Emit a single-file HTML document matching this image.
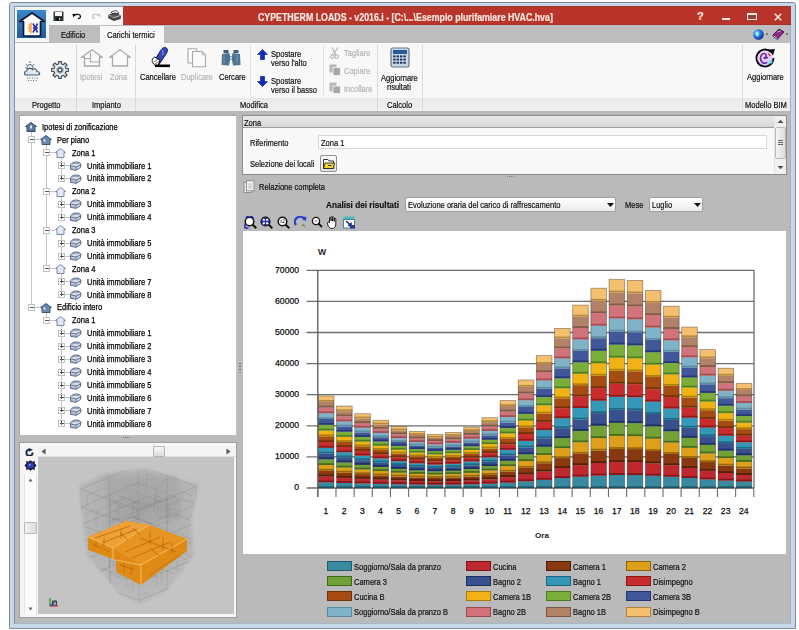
<!DOCTYPE html>
<html><head><meta charset="utf-8">
<style>
*{margin:0;padding:0;box-sizing:border-box}
html,body{width:799px;height:630px;overflow:hidden;background:#fff;font-family:"Liberation Sans",sans-serif;color:#111}
.a{position:absolute}
.t{position:absolute;white-space:nowrap;font-size:8.8px;line-height:10px;transform:scaleX(.855);transform-origin:0 0;color:#111;-webkit-text-stroke-width:0.2px}
</style></head><body>
<!-- window frame -->
<div class="a" style="left:9px;top:2px;width:787px;height:627px;border:1px solid #7a8a9a;background:#c8d8e8;border-radius:3px 3px 0 0"></div>
<!-- app area -->
<div class="a" id="app" style="left:14px;top:6px;width:777px;height:618px;background:#bababa;border-left:1px solid #8890a0;border-right:1px solid #a8b0c0;border-bottom:1px solid #a8b8c8"></div>
<!-- title bar -->
<div class="a" style="left:123px;top:6px;width:668px;height:19px;background:#b9352a;border-top:1px solid #963a30;border-bottom:1px solid #a83028"></div>
<div class="t" style="left:258px;top:13px;font-size:10.3px;font-weight:bold;color:#fbe8e0">CYPETHERM LOADS - v2016.i - [C:\...\Esempio plurifamiare HVAC.hva]</div>
<!-- QAT -->
<div class="a" style="left:14px;top:6px;width:109px;height:19px;background:#fafafa;border-top:1px solid #8a96a4;border-left:1px solid #8890a0"></div>
<!-- app icon -->
<div class="a" style="left:15px;top:7px;width:35px;height:35px;background:#f4f8fc"></div>
<div class="a" style="left:17px;top:10px;width:29px;height:28px;background:linear-gradient(#3d86cc,#1f5aa0)"></div>
<!-- tabs row -->
<div class="a" style="left:49px;top:25px;width:741px;height:18px;background:#bdbdbd"></div>
<div class="t" style="left:61px;top:30px">Edificio</div>
<div class="a" style="left:100px;top:26px;width:64px;height:18px;background:#f8f8f8"></div>
<div class="t" style="left:107px;top:30px">Carichi termici</div>
<!-- ribbon -->
<div class="a" style="left:15px;top:43px;width:775px;height:55px;background:#f8f8f8"></div>
<div class="a" style="left:15px;top:98px;width:775px;height:13px;background:linear-gradient(#e6e6e6,#ececec 20%,#eeeeee 80%,#f2f2f2)"></div>
<div class="a" style="left:15px;top:111px;width:775px;height:4px;background:#b8b8b8"></div>
<div class="t" style="left:32px;top:100px">Progetto</div>
<div class="t" style="left:92px;top:100px">Impianto</div>
<div class="t" style="left:240px;top:100px">Modifica</div>
<div class="t" style="left:387px;top:100px">Calcolo</div>
<div class="t" style="left:745px;top:100px">Modello BIM</div>
<!-- separators -->
<div class="a" style="left:76px;top:45px;width:1px;height:66px;background:#d8d8d8"></div>
<div class="a" style="left:135px;top:45px;width:1px;height:66px;background:#d8d8d8"></div>
<div class="a" style="left:377px;top:45px;width:1px;height:66px;background:#d8d8d8"></div>
<div class="a" style="left:422px;top:45px;width:1px;height:66px;background:#d8d8d8"></div>
<div class="a" style="left:742px;top:45px;width:1px;height:66px;background:#d8d8d8"></div>
<div class="a" style="left:250px;top:45px;width:1px;height:50px;background:#e0e0e0"></div>
<div class="a" style="left:323px;top:45px;width:1px;height:50px;background:#e0e0e0"></div>

<!-- tree panel -->
<div class="a" style="left:19px;top:115px;width:218px;height:321px;background:#fff;border:1px solid #a8a8a8;border-right-color:#c4c4c4;border-bottom-color:#c0c0c0"></div>
<!-- 3D panel -->
<div class="a" style="left:19px;top:442px;width:218px;height:176px;background:#f6f6f6;border:1px solid #a0a0a0"></div>
<div class="a" style="left:38px;top:457px;width:196px;height:157px;background:#c4c4c4"></div>

<!-- right: zona panel -->
<div class="a" style="left:242px;top:115px;width:545px;height:60px;background:#f8f8f8;border:1px solid #8c8c8c"></div>
<div class="a" style="left:243px;top:116px;width:531px;height:12px;background:linear-gradient(#e8e8e8,#d8d8d8);border-bottom:1px solid #a0a0a0"></div>
<div class="t" style="left:244px;top:118px">Zona</div>
<div class="a" style="left:774px;top:116px;width:12px;height:58px;background:#f0f0f0;border-left:1px solid #e4e4e4"></div><svg class="a" style="left:777px;top:119px" width="7" height="5"><path d="M0.5 4 L3.5 0.8 L6.5 4 Z" fill="#505050"/></svg><div class="a" style="left:775px;top:127px;width:11px;height:32px;background:linear-gradient(90deg,#f6f6f6,#dcdcdc);border:1px solid #b8b8b8;border-radius:2px"></div><div class="a" style="left:778px;top:140px;width:5px;height:1px;background:#666;box-shadow:0 2px 0 #666,0 4px 0 #666"></div><svg class="a" style="left:777px;top:165px" width="7" height="5"><path d="M0.5 1 L3.5 4.2 L6.5 1 Z" fill="#505050"/></svg>
<div class="t" style="left:250px;top:138px">Riferimento</div>
<div class="a" style="left:318px;top:135px;width:449px;height:14px;background:#fff;border:1px solid #d8d8d8"></div>
<div class="t" style="left:321px;top:138px">Zona 1</div>
<div class="t" style="left:250px;top:159px">Selezione dei locali</div>
<div class="a" style="left:320px;top:155px;width:17px;height:17px;background:linear-gradient(#fafafa,#e0e0e0);border:1px solid #909090;border-radius:2px"></div>

<!-- chart area -->
<div class="t" style="left:259px;top:182px">Relazione completa</div>
<div class="t" style="left:326px;top:200px;font-size:9.6px;font-weight:bold">Analisi dei risultati</div>
<div class="a" style="left:405px;top:197px;width:211px;height:15px;background:linear-gradient(#fff,#ececec);border:1px solid #a0a0a0;border-radius:2px"></div>
<div class="t" style="left:408px;top:200px">Evoluzione oraria del carico di raffrescamento</div>
<div class="t" style="left:625px;top:200px">Mese</div>
<div class="a" style="left:649px;top:197px;width:54px;height:15px;background:linear-gradient(#fff,#ececec);border:1px solid #a0a0a0;border-radius:2px"></div>
<div class="t" style="left:652px;top:200px">Luglio</div>

<div class="a" style="left:243px;top:231px;width:543px;height:323px;background:#fff"></div>
<!-- splitter dots --><div class="a" style="left:239px;top:363px;width:2px;height:1px;background:#707070;box-shadow:0 3px 0 #707070,0 6px 0 #707070,0 9px 0 #909090"></div><div class="a" style="left:123px;top:437px;width:1px;height:1px;background:#707070;box-shadow:2px 0 0 #707070,4px 0 0 #707070,6px 0 0 #707070"></div><div class="a" style="left:507px;top:176px;width:1px;height:1px;background:#808080;box-shadow:2px 0 0 #808080,4px 0 0 #808080,6px 0 0 #808080"></div>
<svg class="a" style="left:243px;top:231px" width="543" height="323" viewBox="243 231 543 323">
<line x1="306.5" y1="488.00" x2="754" y2="488.00" stroke="#6e6e6e" stroke-width="1.3"/>
<text x="299" y="490.20" text-anchor="end" font-size="8.6" fill="#111" stroke="#111" stroke-width="0.25" font-family="Liberation Sans">0</text>
<line x1="306.5" y1="456.90" x2="754" y2="456.90" stroke="#6e6e6e" stroke-width="1.3"/>
<text x="299" y="459.10" text-anchor="end" font-size="8.6" fill="#111" stroke="#111" stroke-width="0.25" font-family="Liberation Sans">10000</text>
<line x1="306.5" y1="425.80" x2="754" y2="425.80" stroke="#6e6e6e" stroke-width="1.3"/>
<text x="299" y="428.00" text-anchor="end" font-size="8.6" fill="#111" stroke="#111" stroke-width="0.25" font-family="Liberation Sans">20000</text>
<line x1="306.5" y1="394.70" x2="754" y2="394.70" stroke="#6e6e6e" stroke-width="1.3"/>
<text x="299" y="396.90" text-anchor="end" font-size="8.6" fill="#111" stroke="#111" stroke-width="0.25" font-family="Liberation Sans">30000</text>
<line x1="306.5" y1="363.60" x2="754" y2="363.60" stroke="#6e6e6e" stroke-width="1.3"/>
<text x="299" y="365.80" text-anchor="end" font-size="8.6" fill="#111" stroke="#111" stroke-width="0.25" font-family="Liberation Sans">40000</text>
<line x1="306.5" y1="332.50" x2="754" y2="332.50" stroke="#6e6e6e" stroke-width="1.3"/>
<text x="299" y="334.70" text-anchor="end" font-size="8.6" fill="#111" stroke="#111" stroke-width="0.25" font-family="Liberation Sans">50000</text>
<line x1="306.5" y1="301.40" x2="754" y2="301.40" stroke="#6e6e6e" stroke-width="1.3"/>
<text x="299" y="303.60" text-anchor="end" font-size="8.6" fill="#111" stroke="#111" stroke-width="0.25" font-family="Liberation Sans">60000</text>
<line x1="306.5" y1="270.30" x2="754" y2="270.30" stroke="#6e6e6e" stroke-width="1.3"/>
<text x="299" y="272.50" text-anchor="end" font-size="8.6" fill="#111" stroke="#111" stroke-width="0.25" font-family="Liberation Sans">70000</text>
<line x1="754" y1="270.30" x2="754" y2="488.00" stroke="#6e6e6e" stroke-width="1.3"/>
<rect x="318.40" y="482.25" width="15.6" height="5.75" fill="#378aa0"/>
<rect x="318.40" y="486.20" width="15.6" height="1.8" fill="#1d5a6c" opacity="0.9"/>
<rect x="318.40" y="476.50" width="15.6" height="5.75" fill="#c0282f"/>
<rect x="318.40" y="480.45" width="15.6" height="1.8" fill="#7a1418" opacity="0.9"/>
<rect x="318.40" y="470.75" width="15.6" height="5.75" fill="#8a3810"/>
<rect x="318.40" y="474.70" width="15.6" height="1.8" fill="#4e1e05" opacity="0.9"/>
<rect x="318.40" y="465.00" width="15.6" height="5.75" fill="#dea01a"/>
<rect x="318.40" y="468.95" width="15.6" height="1.8" fill="#8f6208" opacity="0.9"/>
<rect x="318.40" y="459.25" width="15.6" height="5.75" fill="#72a236"/>
<rect x="318.40" y="463.20" width="15.6" height="1.8" fill="#44661a" opacity="0.9"/>
<rect x="318.40" y="453.50" width="15.6" height="5.75" fill="#38508e"/>
<rect x="318.40" y="457.45" width="15.6" height="1.8" fill="#1c2c5c" opacity="0.9"/>
<rect x="318.40" y="447.75" width="15.6" height="5.75" fill="#3698b8"/>
<rect x="318.40" y="451.70" width="15.6" height="1.8" fill="#1a6680" opacity="0.9"/>
<rect x="318.40" y="442.00" width="15.6" height="5.75" fill="#c82c2c"/>
<rect x="318.40" y="445.95" width="15.6" height="1.8" fill="#861818" opacity="0.9"/>
<rect x="318.40" y="436.25" width="15.6" height="5.75" fill="#a64c12"/>
<rect x="318.40" y="440.20" width="15.6" height="1.8" fill="#6e3008" opacity="0.9"/>
<rect x="318.40" y="430.50" width="15.6" height="5.75" fill="#f0b214"/>
<rect x="318.40" y="434.45" width="15.6" height="1.8" fill="#a67a08" opacity="0.9"/>
<rect x="318.40" y="424.75" width="15.6" height="5.75" fill="#7aae38"/>
<rect x="318.40" y="428.70" width="15.6" height="1.8" fill="#4e7a1c" opacity="0.9"/>
<rect x="318.40" y="419.00" width="15.6" height="5.75" fill="#40589a"/>
<rect x="318.40" y="422.95" width="15.6" height="1.8" fill="#243470" opacity="0.9"/>
<rect x="318.40" y="413.25" width="15.6" height="5.75" fill="#80b2c8"/>
<rect x="318.40" y="417.20" width="15.6" height="1.8" fill="#5a8aa0" opacity="0.9"/>
<rect x="318.40" y="407.50" width="15.6" height="5.75" fill="#d2727a"/>
<rect x="318.40" y="411.45" width="15.6" height="1.8" fill="#9a4a50" opacity="0.9"/>
<rect x="318.40" y="401.75" width="15.6" height="5.75" fill="#b28268"/>
<rect x="318.40" y="405.70" width="15.6" height="1.8" fill="#7c5640" opacity="0.9"/>
<rect x="318.40" y="396.00" width="15.6" height="5.75" fill="#f4c070"/>
<rect x="318.40" y="399.95" width="15.6" height="1.8" fill="#b08438" opacity="0.9"/>
<rect x="318.40" y="396.00" width="15.6" height="92.00" fill="none" stroke="#2a2018" stroke-opacity="0.45" stroke-width="0.8"/>
<rect x="336.57" y="482.88" width="15.6" height="5.12" fill="#378aa0"/>
<rect x="336.57" y="486.20" width="15.6" height="1.8" fill="#1d5a6c" opacity="0.9"/>
<rect x="336.57" y="477.75" width="15.6" height="5.12" fill="#c0282f"/>
<rect x="336.57" y="481.07" width="15.6" height="1.8" fill="#7a1418" opacity="0.9"/>
<rect x="336.57" y="472.62" width="15.6" height="5.12" fill="#8a3810"/>
<rect x="336.57" y="475.95" width="15.6" height="1.8" fill="#4e1e05" opacity="0.9"/>
<rect x="336.57" y="467.50" width="15.6" height="5.12" fill="#dea01a"/>
<rect x="336.57" y="470.82" width="15.6" height="1.8" fill="#8f6208" opacity="0.9"/>
<rect x="336.57" y="462.38" width="15.6" height="5.12" fill="#72a236"/>
<rect x="336.57" y="465.70" width="15.6" height="1.8" fill="#44661a" opacity="0.9"/>
<rect x="336.57" y="457.25" width="15.6" height="5.12" fill="#38508e"/>
<rect x="336.57" y="460.57" width="15.6" height="1.8" fill="#1c2c5c" opacity="0.9"/>
<rect x="336.57" y="452.12" width="15.6" height="5.12" fill="#3698b8"/>
<rect x="336.57" y="455.45" width="15.6" height="1.8" fill="#1a6680" opacity="0.9"/>
<rect x="336.57" y="447.00" width="15.6" height="5.12" fill="#c82c2c"/>
<rect x="336.57" y="450.32" width="15.6" height="1.8" fill="#861818" opacity="0.9"/>
<rect x="336.57" y="441.88" width="15.6" height="5.12" fill="#a64c12"/>
<rect x="336.57" y="445.20" width="15.6" height="1.8" fill="#6e3008" opacity="0.9"/>
<rect x="336.57" y="436.75" width="15.6" height="5.12" fill="#f0b214"/>
<rect x="336.57" y="440.07" width="15.6" height="1.8" fill="#a67a08" opacity="0.9"/>
<rect x="336.57" y="431.62" width="15.6" height="5.12" fill="#7aae38"/>
<rect x="336.57" y="434.95" width="15.6" height="1.8" fill="#4e7a1c" opacity="0.9"/>
<rect x="336.57" y="426.50" width="15.6" height="5.12" fill="#40589a"/>
<rect x="336.57" y="429.82" width="15.6" height="1.8" fill="#243470" opacity="0.9"/>
<rect x="336.57" y="421.38" width="15.6" height="5.12" fill="#80b2c8"/>
<rect x="336.57" y="424.70" width="15.6" height="1.8" fill="#5a8aa0" opacity="0.9"/>
<rect x="336.57" y="416.25" width="15.6" height="5.12" fill="#d2727a"/>
<rect x="336.57" y="419.57" width="15.6" height="1.8" fill="#9a4a50" opacity="0.9"/>
<rect x="336.57" y="411.12" width="15.6" height="5.12" fill="#b28268"/>
<rect x="336.57" y="414.45" width="15.6" height="1.8" fill="#7c5640" opacity="0.9"/>
<rect x="336.57" y="406.00" width="15.6" height="5.12" fill="#f4c070"/>
<rect x="336.57" y="409.32" width="15.6" height="1.8" fill="#b08438" opacity="0.9"/>
<rect x="336.57" y="406.00" width="15.6" height="82.00" fill="none" stroke="#2a2018" stroke-opacity="0.45" stroke-width="0.8"/>
<rect x="354.73" y="483.36" width="15.6" height="4.64" fill="#378aa0"/>
<rect x="354.73" y="486.20" width="15.6" height="1.8" fill="#1d5a6c" opacity="0.9"/>
<rect x="354.73" y="478.72" width="15.6" height="4.64" fill="#c0282f"/>
<rect x="354.73" y="481.56" width="15.6" height="1.8" fill="#7a1418" opacity="0.9"/>
<rect x="354.73" y="474.08" width="15.6" height="4.64" fill="#8a3810"/>
<rect x="354.73" y="476.92" width="15.6" height="1.8" fill="#4e1e05" opacity="0.9"/>
<rect x="354.73" y="469.44" width="15.6" height="4.64" fill="#dea01a"/>
<rect x="354.73" y="472.28" width="15.6" height="1.8" fill="#8f6208" opacity="0.9"/>
<rect x="354.73" y="464.80" width="15.6" height="4.64" fill="#72a236"/>
<rect x="354.73" y="467.64" width="15.6" height="1.8" fill="#44661a" opacity="0.9"/>
<rect x="354.73" y="460.16" width="15.6" height="4.64" fill="#38508e"/>
<rect x="354.73" y="463.00" width="15.6" height="1.8" fill="#1c2c5c" opacity="0.9"/>
<rect x="354.73" y="455.52" width="15.6" height="4.64" fill="#3698b8"/>
<rect x="354.73" y="458.36" width="15.6" height="1.8" fill="#1a6680" opacity="0.9"/>
<rect x="354.73" y="450.88" width="15.6" height="4.64" fill="#c82c2c"/>
<rect x="354.73" y="453.72" width="15.6" height="1.8" fill="#861818" opacity="0.9"/>
<rect x="354.73" y="446.23" width="15.6" height="4.64" fill="#a64c12"/>
<rect x="354.73" y="449.07" width="15.6" height="1.8" fill="#6e3008" opacity="0.9"/>
<rect x="354.73" y="441.59" width="15.6" height="4.64" fill="#f0b214"/>
<rect x="354.73" y="444.43" width="15.6" height="1.8" fill="#a67a08" opacity="0.9"/>
<rect x="354.73" y="436.95" width="15.6" height="4.64" fill="#7aae38"/>
<rect x="354.73" y="439.79" width="15.6" height="1.8" fill="#4e7a1c" opacity="0.9"/>
<rect x="354.73" y="432.31" width="15.6" height="4.64" fill="#40589a"/>
<rect x="354.73" y="435.15" width="15.6" height="1.8" fill="#243470" opacity="0.9"/>
<rect x="354.73" y="427.67" width="15.6" height="4.64" fill="#80b2c8"/>
<rect x="354.73" y="430.51" width="15.6" height="1.8" fill="#5a8aa0" opacity="0.9"/>
<rect x="354.73" y="423.03" width="15.6" height="4.64" fill="#d2727a"/>
<rect x="354.73" y="425.87" width="15.6" height="1.8" fill="#9a4a50" opacity="0.9"/>
<rect x="354.73" y="418.39" width="15.6" height="4.64" fill="#b28268"/>
<rect x="354.73" y="421.23" width="15.6" height="1.8" fill="#7c5640" opacity="0.9"/>
<rect x="354.73" y="413.75" width="15.6" height="4.64" fill="#f4c070"/>
<rect x="354.73" y="416.59" width="15.6" height="1.8" fill="#b08438" opacity="0.9"/>
<rect x="354.73" y="413.75" width="15.6" height="74.25" fill="none" stroke="#2a2018" stroke-opacity="0.45" stroke-width="0.8"/>
<rect x="372.90" y="483.77" width="15.6" height="4.23" fill="#378aa0"/>
<rect x="372.90" y="486.20" width="15.6" height="1.8" fill="#1d5a6c" opacity="0.9"/>
<rect x="372.90" y="479.53" width="15.6" height="4.23" fill="#c0282f"/>
<rect x="372.90" y="481.97" width="15.6" height="1.8" fill="#7a1418" opacity="0.9"/>
<rect x="372.90" y="475.30" width="15.6" height="4.23" fill="#8a3810"/>
<rect x="372.90" y="477.73" width="15.6" height="1.8" fill="#4e1e05" opacity="0.9"/>
<rect x="372.90" y="471.06" width="15.6" height="4.23" fill="#dea01a"/>
<rect x="372.90" y="473.50" width="15.6" height="1.8" fill="#8f6208" opacity="0.9"/>
<rect x="372.90" y="466.83" width="15.6" height="4.23" fill="#72a236"/>
<rect x="372.90" y="469.26" width="15.6" height="1.8" fill="#44661a" opacity="0.9"/>
<rect x="372.90" y="462.59" width="15.6" height="4.23" fill="#38508e"/>
<rect x="372.90" y="465.03" width="15.6" height="1.8" fill="#1c2c5c" opacity="0.9"/>
<rect x="372.90" y="458.36" width="15.6" height="4.23" fill="#3698b8"/>
<rect x="372.90" y="460.79" width="15.6" height="1.8" fill="#1a6680" opacity="0.9"/>
<rect x="372.90" y="454.12" width="15.6" height="4.23" fill="#c82c2c"/>
<rect x="372.90" y="456.56" width="15.6" height="1.8" fill="#861818" opacity="0.9"/>
<rect x="372.90" y="449.89" width="15.6" height="4.23" fill="#a64c12"/>
<rect x="372.90" y="452.32" width="15.6" height="1.8" fill="#6e3008" opacity="0.9"/>
<rect x="372.90" y="445.66" width="15.6" height="4.23" fill="#f0b214"/>
<rect x="372.90" y="448.09" width="15.6" height="1.8" fill="#a67a08" opacity="0.9"/>
<rect x="372.90" y="441.42" width="15.6" height="4.23" fill="#7aae38"/>
<rect x="372.90" y="443.86" width="15.6" height="1.8" fill="#4e7a1c" opacity="0.9"/>
<rect x="372.90" y="437.19" width="15.6" height="4.23" fill="#40589a"/>
<rect x="372.90" y="439.62" width="15.6" height="1.8" fill="#243470" opacity="0.9"/>
<rect x="372.90" y="432.95" width="15.6" height="4.23" fill="#80b2c8"/>
<rect x="372.90" y="435.39" width="15.6" height="1.8" fill="#5a8aa0" opacity="0.9"/>
<rect x="372.90" y="428.72" width="15.6" height="4.23" fill="#d2727a"/>
<rect x="372.90" y="431.15" width="15.6" height="1.8" fill="#9a4a50" opacity="0.9"/>
<rect x="372.90" y="424.48" width="15.6" height="4.23" fill="#b28268"/>
<rect x="372.90" y="426.92" width="15.6" height="1.8" fill="#7c5640" opacity="0.9"/>
<rect x="372.90" y="420.25" width="15.6" height="4.23" fill="#f4c070"/>
<rect x="372.90" y="422.68" width="15.6" height="1.8" fill="#b08438" opacity="0.9"/>
<rect x="372.90" y="420.25" width="15.6" height="67.75" fill="none" stroke="#2a2018" stroke-opacity="0.45" stroke-width="0.8"/>
<rect x="391.06" y="484.16" width="15.6" height="3.84" fill="#378aa0"/>
<rect x="391.06" y="486.20" width="15.6" height="1.8" fill="#1d5a6c" opacity="0.9"/>
<rect x="391.06" y="480.33" width="15.6" height="3.84" fill="#c0282f"/>
<rect x="391.06" y="482.36" width="15.6" height="1.8" fill="#7a1418" opacity="0.9"/>
<rect x="391.06" y="476.49" width="15.6" height="3.84" fill="#8a3810"/>
<rect x="391.06" y="478.52" width="15.6" height="1.8" fill="#4e1e05" opacity="0.9"/>
<rect x="391.06" y="472.65" width="15.6" height="3.84" fill="#dea01a"/>
<rect x="391.06" y="474.69" width="15.6" height="1.8" fill="#8f6208" opacity="0.9"/>
<rect x="391.06" y="468.81" width="15.6" height="3.84" fill="#72a236"/>
<rect x="391.06" y="470.85" width="15.6" height="1.8" fill="#44661a" opacity="0.9"/>
<rect x="391.06" y="464.98" width="15.6" height="3.84" fill="#38508e"/>
<rect x="391.06" y="467.01" width="15.6" height="1.8" fill="#1c2c5c" opacity="0.9"/>
<rect x="391.06" y="461.14" width="15.6" height="3.84" fill="#3698b8"/>
<rect x="391.06" y="463.18" width="15.6" height="1.8" fill="#1a6680" opacity="0.9"/>
<rect x="391.06" y="457.30" width="15.6" height="3.84" fill="#c82c2c"/>
<rect x="391.06" y="459.34" width="15.6" height="1.8" fill="#861818" opacity="0.9"/>
<rect x="391.06" y="453.46" width="15.6" height="3.84" fill="#a64c12"/>
<rect x="391.06" y="455.50" width="15.6" height="1.8" fill="#6e3008" opacity="0.9"/>
<rect x="391.06" y="449.63" width="15.6" height="3.84" fill="#f0b214"/>
<rect x="391.06" y="451.66" width="15.6" height="1.8" fill="#a67a08" opacity="0.9"/>
<rect x="391.06" y="445.79" width="15.6" height="3.84" fill="#7aae38"/>
<rect x="391.06" y="447.82" width="15.6" height="1.8" fill="#4e7a1c" opacity="0.9"/>
<rect x="391.06" y="441.95" width="15.6" height="3.84" fill="#40589a"/>
<rect x="391.06" y="443.99" width="15.6" height="1.8" fill="#243470" opacity="0.9"/>
<rect x="391.06" y="438.11" width="15.6" height="3.84" fill="#80b2c8"/>
<rect x="391.06" y="440.15" width="15.6" height="1.8" fill="#5a8aa0" opacity="0.9"/>
<rect x="391.06" y="434.28" width="15.6" height="3.84" fill="#d2727a"/>
<rect x="391.06" y="436.31" width="15.6" height="1.8" fill="#9a4a50" opacity="0.9"/>
<rect x="391.06" y="430.44" width="15.6" height="3.84" fill="#b28268"/>
<rect x="391.06" y="432.48" width="15.6" height="1.8" fill="#7c5640" opacity="0.9"/>
<rect x="391.06" y="426.60" width="15.6" height="3.84" fill="#f4c070"/>
<rect x="391.06" y="428.64" width="15.6" height="1.8" fill="#b08438" opacity="0.9"/>
<rect x="391.06" y="426.60" width="15.6" height="61.40" fill="none" stroke="#2a2018" stroke-opacity="0.45" stroke-width="0.8"/>
<rect x="409.23" y="484.46" width="15.6" height="3.54" fill="#378aa0"/>
<rect x="409.23" y="486.20" width="15.6" height="1.8" fill="#1d5a6c" opacity="0.9"/>
<rect x="409.23" y="480.92" width="15.6" height="3.54" fill="#c0282f"/>
<rect x="409.23" y="482.66" width="15.6" height="1.8" fill="#7a1418" opacity="0.9"/>
<rect x="409.23" y="477.39" width="15.6" height="3.54" fill="#8a3810"/>
<rect x="409.23" y="479.12" width="15.6" height="1.8" fill="#4e1e05" opacity="0.9"/>
<rect x="409.23" y="473.85" width="15.6" height="3.54" fill="#dea01a"/>
<rect x="409.23" y="475.59" width="15.6" height="1.8" fill="#8f6208" opacity="0.9"/>
<rect x="409.23" y="470.31" width="15.6" height="3.54" fill="#72a236"/>
<rect x="409.23" y="472.05" width="15.6" height="1.8" fill="#44661a" opacity="0.9"/>
<rect x="409.23" y="466.77" width="15.6" height="3.54" fill="#38508e"/>
<rect x="409.23" y="468.51" width="15.6" height="1.8" fill="#1c2c5c" opacity="0.9"/>
<rect x="409.23" y="463.24" width="15.6" height="3.54" fill="#3698b8"/>
<rect x="409.23" y="464.97" width="15.6" height="1.8" fill="#1a6680" opacity="0.9"/>
<rect x="409.23" y="459.70" width="15.6" height="3.54" fill="#c82c2c"/>
<rect x="409.23" y="461.44" width="15.6" height="1.8" fill="#861818" opacity="0.9"/>
<rect x="409.23" y="456.16" width="15.6" height="3.54" fill="#a64c12"/>
<rect x="409.23" y="457.90" width="15.6" height="1.8" fill="#6e3008" opacity="0.9"/>
<rect x="409.23" y="452.62" width="15.6" height="3.54" fill="#f0b214"/>
<rect x="409.23" y="454.36" width="15.6" height="1.8" fill="#a67a08" opacity="0.9"/>
<rect x="409.23" y="449.09" width="15.6" height="3.54" fill="#7aae38"/>
<rect x="409.23" y="450.82" width="15.6" height="1.8" fill="#4e7a1c" opacity="0.9"/>
<rect x="409.23" y="445.55" width="15.6" height="3.54" fill="#40589a"/>
<rect x="409.23" y="447.29" width="15.6" height="1.8" fill="#243470" opacity="0.9"/>
<rect x="409.23" y="442.01" width="15.6" height="3.54" fill="#80b2c8"/>
<rect x="409.23" y="443.75" width="15.6" height="1.8" fill="#5a8aa0" opacity="0.9"/>
<rect x="409.23" y="438.47" width="15.6" height="3.54" fill="#d2727a"/>
<rect x="409.23" y="440.21" width="15.6" height="1.8" fill="#9a4a50" opacity="0.9"/>
<rect x="409.23" y="434.94" width="15.6" height="3.54" fill="#b28268"/>
<rect x="409.23" y="436.67" width="15.6" height="1.8" fill="#7c5640" opacity="0.9"/>
<rect x="409.23" y="431.40" width="15.6" height="3.54" fill="#f4c070"/>
<rect x="409.23" y="433.14" width="15.6" height="1.8" fill="#b08438" opacity="0.9"/>
<rect x="409.23" y="431.40" width="15.6" height="56.60" fill="none" stroke="#2a2018" stroke-opacity="0.45" stroke-width="0.8"/>
<rect x="427.40" y="484.64" width="15.6" height="3.36" fill="#378aa0"/>
<rect x="427.40" y="486.20" width="15.6" height="1.8" fill="#1d5a6c" opacity="0.9"/>
<rect x="427.40" y="481.29" width="15.6" height="3.36" fill="#c0282f"/>
<rect x="427.40" y="482.84" width="15.6" height="1.8" fill="#7a1418" opacity="0.9"/>
<rect x="427.40" y="477.93" width="15.6" height="3.36" fill="#8a3810"/>
<rect x="427.40" y="479.49" width="15.6" height="1.8" fill="#4e1e05" opacity="0.9"/>
<rect x="427.40" y="474.57" width="15.6" height="3.36" fill="#dea01a"/>
<rect x="427.40" y="476.13" width="15.6" height="1.8" fill="#8f6208" opacity="0.9"/>
<rect x="427.40" y="471.22" width="15.6" height="3.36" fill="#72a236"/>
<rect x="427.40" y="472.77" width="15.6" height="1.8" fill="#44661a" opacity="0.9"/>
<rect x="427.40" y="467.86" width="15.6" height="3.36" fill="#38508e"/>
<rect x="427.40" y="469.42" width="15.6" height="1.8" fill="#1c2c5c" opacity="0.9"/>
<rect x="427.40" y="464.51" width="15.6" height="3.36" fill="#3698b8"/>
<rect x="427.40" y="466.06" width="15.6" height="1.8" fill="#1a6680" opacity="0.9"/>
<rect x="427.40" y="461.15" width="15.6" height="3.36" fill="#c82c2c"/>
<rect x="427.40" y="462.71" width="15.6" height="1.8" fill="#861818" opacity="0.9"/>
<rect x="427.40" y="457.79" width="15.6" height="3.36" fill="#a64c12"/>
<rect x="427.40" y="459.35" width="15.6" height="1.8" fill="#6e3008" opacity="0.9"/>
<rect x="427.40" y="454.44" width="15.6" height="3.36" fill="#f0b214"/>
<rect x="427.40" y="455.99" width="15.6" height="1.8" fill="#a67a08" opacity="0.9"/>
<rect x="427.40" y="451.08" width="15.6" height="3.36" fill="#7aae38"/>
<rect x="427.40" y="452.64" width="15.6" height="1.8" fill="#4e7a1c" opacity="0.9"/>
<rect x="427.40" y="447.73" width="15.6" height="3.36" fill="#40589a"/>
<rect x="427.40" y="449.28" width="15.6" height="1.8" fill="#243470" opacity="0.9"/>
<rect x="427.40" y="444.37" width="15.6" height="3.36" fill="#80b2c8"/>
<rect x="427.40" y="445.93" width="15.6" height="1.8" fill="#5a8aa0" opacity="0.9"/>
<rect x="427.40" y="441.01" width="15.6" height="3.36" fill="#d2727a"/>
<rect x="427.40" y="442.57" width="15.6" height="1.8" fill="#9a4a50" opacity="0.9"/>
<rect x="427.40" y="437.66" width="15.6" height="3.36" fill="#b28268"/>
<rect x="427.40" y="439.21" width="15.6" height="1.8" fill="#7c5640" opacity="0.9"/>
<rect x="427.40" y="434.30" width="15.6" height="3.36" fill="#f4c070"/>
<rect x="427.40" y="435.86" width="15.6" height="1.8" fill="#b08438" opacity="0.9"/>
<rect x="427.40" y="434.30" width="15.6" height="53.70" fill="none" stroke="#2a2018" stroke-opacity="0.45" stroke-width="0.8"/>
<rect x="445.56" y="484.52" width="15.6" height="3.48" fill="#378aa0"/>
<rect x="445.56" y="486.20" width="15.6" height="1.8" fill="#1d5a6c" opacity="0.9"/>
<rect x="445.56" y="481.05" width="15.6" height="3.48" fill="#c0282f"/>
<rect x="445.56" y="482.72" width="15.6" height="1.8" fill="#7a1418" opacity="0.9"/>
<rect x="445.56" y="477.57" width="15.6" height="3.48" fill="#8a3810"/>
<rect x="445.56" y="479.25" width="15.6" height="1.8" fill="#4e1e05" opacity="0.9"/>
<rect x="445.56" y="474.10" width="15.6" height="3.48" fill="#dea01a"/>
<rect x="445.56" y="475.77" width="15.6" height="1.8" fill="#8f6208" opacity="0.9"/>
<rect x="445.56" y="470.62" width="15.6" height="3.48" fill="#72a236"/>
<rect x="445.56" y="472.30" width="15.6" height="1.8" fill="#44661a" opacity="0.9"/>
<rect x="445.56" y="467.15" width="15.6" height="3.48" fill="#38508e"/>
<rect x="445.56" y="468.82" width="15.6" height="1.8" fill="#1c2c5c" opacity="0.9"/>
<rect x="445.56" y="463.67" width="15.6" height="3.48" fill="#3698b8"/>
<rect x="445.56" y="465.35" width="15.6" height="1.8" fill="#1a6680" opacity="0.9"/>
<rect x="445.56" y="460.20" width="15.6" height="3.48" fill="#c82c2c"/>
<rect x="445.56" y="461.88" width="15.6" height="1.8" fill="#861818" opacity="0.9"/>
<rect x="445.56" y="456.72" width="15.6" height="3.48" fill="#a64c12"/>
<rect x="445.56" y="458.40" width="15.6" height="1.8" fill="#6e3008" opacity="0.9"/>
<rect x="445.56" y="453.25" width="15.6" height="3.48" fill="#f0b214"/>
<rect x="445.56" y="454.92" width="15.6" height="1.8" fill="#a67a08" opacity="0.9"/>
<rect x="445.56" y="449.77" width="15.6" height="3.48" fill="#7aae38"/>
<rect x="445.56" y="451.45" width="15.6" height="1.8" fill="#4e7a1c" opacity="0.9"/>
<rect x="445.56" y="446.30" width="15.6" height="3.48" fill="#40589a"/>
<rect x="445.56" y="447.97" width="15.6" height="1.8" fill="#243470" opacity="0.9"/>
<rect x="445.56" y="442.82" width="15.6" height="3.48" fill="#80b2c8"/>
<rect x="445.56" y="444.50" width="15.6" height="1.8" fill="#5a8aa0" opacity="0.9"/>
<rect x="445.56" y="439.35" width="15.6" height="3.48" fill="#d2727a"/>
<rect x="445.56" y="441.02" width="15.6" height="1.8" fill="#9a4a50" opacity="0.9"/>
<rect x="445.56" y="435.87" width="15.6" height="3.48" fill="#b28268"/>
<rect x="445.56" y="437.55" width="15.6" height="1.8" fill="#7c5640" opacity="0.9"/>
<rect x="445.56" y="432.40" width="15.6" height="3.48" fill="#f4c070"/>
<rect x="445.56" y="434.07" width="15.6" height="1.8" fill="#b08438" opacity="0.9"/>
<rect x="445.56" y="432.40" width="15.6" height="55.60" fill="none" stroke="#2a2018" stroke-opacity="0.45" stroke-width="0.8"/>
<rect x="463.73" y="484.20" width="15.6" height="3.80" fill="#378aa0"/>
<rect x="463.73" y="486.20" width="15.6" height="1.8" fill="#1d5a6c" opacity="0.9"/>
<rect x="463.73" y="480.40" width="15.6" height="3.80" fill="#c0282f"/>
<rect x="463.73" y="482.40" width="15.6" height="1.8" fill="#7a1418" opacity="0.9"/>
<rect x="463.73" y="476.60" width="15.6" height="3.80" fill="#8a3810"/>
<rect x="463.73" y="478.60" width="15.6" height="1.8" fill="#4e1e05" opacity="0.9"/>
<rect x="463.73" y="472.80" width="15.6" height="3.80" fill="#dea01a"/>
<rect x="463.73" y="474.80" width="15.6" height="1.8" fill="#8f6208" opacity="0.9"/>
<rect x="463.73" y="469.00" width="15.6" height="3.80" fill="#72a236"/>
<rect x="463.73" y="471.00" width="15.6" height="1.8" fill="#44661a" opacity="0.9"/>
<rect x="463.73" y="465.20" width="15.6" height="3.80" fill="#38508e"/>
<rect x="463.73" y="467.20" width="15.6" height="1.8" fill="#1c2c5c" opacity="0.9"/>
<rect x="463.73" y="461.40" width="15.6" height="3.80" fill="#3698b8"/>
<rect x="463.73" y="463.40" width="15.6" height="1.8" fill="#1a6680" opacity="0.9"/>
<rect x="463.73" y="457.60" width="15.6" height="3.80" fill="#c82c2c"/>
<rect x="463.73" y="459.60" width="15.6" height="1.8" fill="#861818" opacity="0.9"/>
<rect x="463.73" y="453.80" width="15.6" height="3.80" fill="#a64c12"/>
<rect x="463.73" y="455.80" width="15.6" height="1.8" fill="#6e3008" opacity="0.9"/>
<rect x="463.73" y="450.00" width="15.6" height="3.80" fill="#f0b214"/>
<rect x="463.73" y="452.00" width="15.6" height="1.8" fill="#a67a08" opacity="0.9"/>
<rect x="463.73" y="446.20" width="15.6" height="3.80" fill="#7aae38"/>
<rect x="463.73" y="448.20" width="15.6" height="1.8" fill="#4e7a1c" opacity="0.9"/>
<rect x="463.73" y="442.40" width="15.6" height="3.80" fill="#40589a"/>
<rect x="463.73" y="444.40" width="15.6" height="1.8" fill="#243470" opacity="0.9"/>
<rect x="463.73" y="438.60" width="15.6" height="3.80" fill="#80b2c8"/>
<rect x="463.73" y="440.60" width="15.6" height="1.8" fill="#5a8aa0" opacity="0.9"/>
<rect x="463.73" y="434.80" width="15.6" height="3.80" fill="#d2727a"/>
<rect x="463.73" y="436.80" width="15.6" height="1.8" fill="#9a4a50" opacity="0.9"/>
<rect x="463.73" y="431.00" width="15.6" height="3.80" fill="#b28268"/>
<rect x="463.73" y="433.00" width="15.6" height="1.8" fill="#7c5640" opacity="0.9"/>
<rect x="463.73" y="427.20" width="15.6" height="3.80" fill="#f4c070"/>
<rect x="463.73" y="429.20" width="15.6" height="1.8" fill="#b08438" opacity="0.9"/>
<rect x="463.73" y="427.20" width="15.6" height="60.80" fill="none" stroke="#2a2018" stroke-opacity="0.45" stroke-width="0.8"/>
<rect x="481.89" y="483.61" width="15.6" height="4.39" fill="#378aa0"/>
<rect x="481.89" y="486.20" width="15.6" height="1.8" fill="#1d5a6c" opacity="0.9"/>
<rect x="481.89" y="479.21" width="15.6" height="4.39" fill="#c0282f"/>
<rect x="481.89" y="481.81" width="15.6" height="1.8" fill="#7a1418" opacity="0.9"/>
<rect x="481.89" y="474.82" width="15.6" height="4.39" fill="#8a3810"/>
<rect x="481.89" y="477.41" width="15.6" height="1.8" fill="#4e1e05" opacity="0.9"/>
<rect x="481.89" y="470.43" width="15.6" height="4.39" fill="#dea01a"/>
<rect x="481.89" y="473.02" width="15.6" height="1.8" fill="#8f6208" opacity="0.9"/>
<rect x="481.89" y="466.03" width="15.6" height="4.39" fill="#72a236"/>
<rect x="481.89" y="468.62" width="15.6" height="1.8" fill="#44661a" opacity="0.9"/>
<rect x="481.89" y="461.64" width="15.6" height="4.39" fill="#38508e"/>
<rect x="481.89" y="464.23" width="15.6" height="1.8" fill="#1c2c5c" opacity="0.9"/>
<rect x="481.89" y="457.24" width="15.6" height="4.39" fill="#3698b8"/>
<rect x="481.89" y="459.84" width="15.6" height="1.8" fill="#1a6680" opacity="0.9"/>
<rect x="481.89" y="452.85" width="15.6" height="4.39" fill="#c82c2c"/>
<rect x="481.89" y="455.44" width="15.6" height="1.8" fill="#861818" opacity="0.9"/>
<rect x="481.89" y="448.46" width="15.6" height="4.39" fill="#a64c12"/>
<rect x="481.89" y="451.05" width="15.6" height="1.8" fill="#6e3008" opacity="0.9"/>
<rect x="481.89" y="444.06" width="15.6" height="4.39" fill="#f0b214"/>
<rect x="481.89" y="446.66" width="15.6" height="1.8" fill="#a67a08" opacity="0.9"/>
<rect x="481.89" y="439.67" width="15.6" height="4.39" fill="#7aae38"/>
<rect x="481.89" y="442.26" width="15.6" height="1.8" fill="#4e7a1c" opacity="0.9"/>
<rect x="481.89" y="435.27" width="15.6" height="4.39" fill="#40589a"/>
<rect x="481.89" y="437.87" width="15.6" height="1.8" fill="#243470" opacity="0.9"/>
<rect x="481.89" y="430.88" width="15.6" height="4.39" fill="#80b2c8"/>
<rect x="481.89" y="433.47" width="15.6" height="1.8" fill="#5a8aa0" opacity="0.9"/>
<rect x="481.89" y="426.49" width="15.6" height="4.39" fill="#d2727a"/>
<rect x="481.89" y="429.08" width="15.6" height="1.8" fill="#9a4a50" opacity="0.9"/>
<rect x="481.89" y="422.09" width="15.6" height="4.39" fill="#b28268"/>
<rect x="481.89" y="424.69" width="15.6" height="1.8" fill="#7c5640" opacity="0.9"/>
<rect x="481.89" y="417.70" width="15.6" height="4.39" fill="#f4c070"/>
<rect x="481.89" y="420.29" width="15.6" height="1.8" fill="#b08438" opacity="0.9"/>
<rect x="481.89" y="417.70" width="15.6" height="70.30" fill="none" stroke="#2a2018" stroke-opacity="0.45" stroke-width="0.8"/>
<rect x="500.06" y="482.54" width="15.6" height="5.46" fill="#378aa0"/>
<rect x="500.06" y="486.20" width="15.6" height="1.8" fill="#1d5a6c" opacity="0.9"/>
<rect x="500.06" y="477.08" width="15.6" height="5.46" fill="#c0282f"/>
<rect x="500.06" y="480.74" width="15.6" height="1.8" fill="#7a1418" opacity="0.9"/>
<rect x="500.06" y="471.61" width="15.6" height="5.46" fill="#8a3810"/>
<rect x="500.06" y="475.27" width="15.6" height="1.8" fill="#4e1e05" opacity="0.9"/>
<rect x="500.06" y="466.15" width="15.6" height="5.46" fill="#dea01a"/>
<rect x="500.06" y="469.81" width="15.6" height="1.8" fill="#8f6208" opacity="0.9"/>
<rect x="500.06" y="460.69" width="15.6" height="5.46" fill="#72a236"/>
<rect x="500.06" y="464.35" width="15.6" height="1.8" fill="#44661a" opacity="0.9"/>
<rect x="500.06" y="455.23" width="15.6" height="5.46" fill="#38508e"/>
<rect x="500.06" y="458.89" width="15.6" height="1.8" fill="#1c2c5c" opacity="0.9"/>
<rect x="500.06" y="449.76" width="15.6" height="5.46" fill="#3698b8"/>
<rect x="500.06" y="453.43" width="15.6" height="1.8" fill="#1a6680" opacity="0.9"/>
<rect x="500.06" y="444.30" width="15.6" height="5.46" fill="#c82c2c"/>
<rect x="500.06" y="447.96" width="15.6" height="1.8" fill="#861818" opacity="0.9"/>
<rect x="500.06" y="438.84" width="15.6" height="5.46" fill="#a64c12"/>
<rect x="500.06" y="442.50" width="15.6" height="1.8" fill="#6e3008" opacity="0.9"/>
<rect x="500.06" y="433.38" width="15.6" height="5.46" fill="#f0b214"/>
<rect x="500.06" y="437.04" width="15.6" height="1.8" fill="#a67a08" opacity="0.9"/>
<rect x="500.06" y="427.91" width="15.6" height="5.46" fill="#7aae38"/>
<rect x="500.06" y="431.57" width="15.6" height="1.8" fill="#4e7a1c" opacity="0.9"/>
<rect x="500.06" y="422.45" width="15.6" height="5.46" fill="#40589a"/>
<rect x="500.06" y="426.11" width="15.6" height="1.8" fill="#243470" opacity="0.9"/>
<rect x="500.06" y="416.99" width="15.6" height="5.46" fill="#80b2c8"/>
<rect x="500.06" y="420.65" width="15.6" height="1.8" fill="#5a8aa0" opacity="0.9"/>
<rect x="500.06" y="411.53" width="15.6" height="5.46" fill="#d2727a"/>
<rect x="500.06" y="415.19" width="15.6" height="1.8" fill="#9a4a50" opacity="0.9"/>
<rect x="500.06" y="406.06" width="15.6" height="5.46" fill="#b28268"/>
<rect x="500.06" y="409.73" width="15.6" height="1.8" fill="#7c5640" opacity="0.9"/>
<rect x="500.06" y="400.60" width="15.6" height="5.46" fill="#f4c070"/>
<rect x="500.06" y="404.26" width="15.6" height="1.8" fill="#b08438" opacity="0.9"/>
<rect x="500.06" y="400.60" width="15.6" height="87.40" fill="none" stroke="#2a2018" stroke-opacity="0.45" stroke-width="0.8"/>
<rect x="518.23" y="481.25" width="15.6" height="6.75" fill="#378aa0"/>
<rect x="518.23" y="486.20" width="15.6" height="1.8" fill="#1d5a6c" opacity="0.9"/>
<rect x="518.23" y="474.50" width="15.6" height="6.75" fill="#c0282f"/>
<rect x="518.23" y="479.45" width="15.6" height="1.8" fill="#7a1418" opacity="0.9"/>
<rect x="518.23" y="467.75" width="15.6" height="6.75" fill="#8a3810"/>
<rect x="518.23" y="472.70" width="15.6" height="1.8" fill="#4e1e05" opacity="0.9"/>
<rect x="518.23" y="461.00" width="15.6" height="6.75" fill="#dea01a"/>
<rect x="518.23" y="465.95" width="15.6" height="1.8" fill="#8f6208" opacity="0.9"/>
<rect x="518.23" y="454.25" width="15.6" height="6.75" fill="#72a236"/>
<rect x="518.23" y="459.20" width="15.6" height="1.8" fill="#44661a" opacity="0.9"/>
<rect x="518.23" y="447.50" width="15.6" height="6.75" fill="#38508e"/>
<rect x="518.23" y="452.45" width="15.6" height="1.8" fill="#1c2c5c" opacity="0.9"/>
<rect x="518.23" y="440.75" width="15.6" height="6.75" fill="#3698b8"/>
<rect x="518.23" y="445.70" width="15.6" height="1.8" fill="#1a6680" opacity="0.9"/>
<rect x="518.23" y="434.00" width="15.6" height="6.75" fill="#c82c2c"/>
<rect x="518.23" y="438.95" width="15.6" height="1.8" fill="#861818" opacity="0.9"/>
<rect x="518.23" y="427.25" width="15.6" height="6.75" fill="#a64c12"/>
<rect x="518.23" y="432.20" width="15.6" height="1.8" fill="#6e3008" opacity="0.9"/>
<rect x="518.23" y="420.50" width="15.6" height="6.75" fill="#f0b214"/>
<rect x="518.23" y="425.45" width="15.6" height="1.8" fill="#a67a08" opacity="0.9"/>
<rect x="518.23" y="413.75" width="15.6" height="6.75" fill="#7aae38"/>
<rect x="518.23" y="418.70" width="15.6" height="1.8" fill="#4e7a1c" opacity="0.9"/>
<rect x="518.23" y="407.00" width="15.6" height="6.75" fill="#40589a"/>
<rect x="518.23" y="411.95" width="15.6" height="1.8" fill="#243470" opacity="0.9"/>
<rect x="518.23" y="400.25" width="15.6" height="6.75" fill="#80b2c8"/>
<rect x="518.23" y="405.20" width="15.6" height="1.8" fill="#5a8aa0" opacity="0.9"/>
<rect x="518.23" y="393.50" width="15.6" height="6.75" fill="#d2727a"/>
<rect x="518.23" y="398.45" width="15.6" height="1.8" fill="#9a4a50" opacity="0.9"/>
<rect x="518.23" y="386.75" width="15.6" height="6.75" fill="#b28268"/>
<rect x="518.23" y="391.70" width="15.6" height="1.8" fill="#7c5640" opacity="0.9"/>
<rect x="518.23" y="380.00" width="15.6" height="6.75" fill="#f4c070"/>
<rect x="518.23" y="384.95" width="15.6" height="1.8" fill="#b08438" opacity="0.9"/>
<rect x="518.23" y="380.00" width="15.6" height="108.00" fill="none" stroke="#2a2018" stroke-opacity="0.45" stroke-width="0.8"/>
<rect x="536.39" y="479.73" width="15.6" height="8.27" fill="#378aa0"/>
<rect x="536.39" y="486.20" width="15.6" height="1.8" fill="#1d5a6c" opacity="0.9"/>
<rect x="536.39" y="471.45" width="15.6" height="8.27" fill="#c0282f"/>
<rect x="536.39" y="477.93" width="15.6" height="1.8" fill="#7a1418" opacity="0.9"/>
<rect x="536.39" y="463.18" width="15.6" height="8.27" fill="#8a3810"/>
<rect x="536.39" y="469.65" width="15.6" height="1.8" fill="#4e1e05" opacity="0.9"/>
<rect x="536.39" y="454.90" width="15.6" height="8.27" fill="#dea01a"/>
<rect x="536.39" y="461.38" width="15.6" height="1.8" fill="#8f6208" opacity="0.9"/>
<rect x="536.39" y="446.62" width="15.6" height="8.27" fill="#72a236"/>
<rect x="536.39" y="453.10" width="15.6" height="1.8" fill="#44661a" opacity="0.9"/>
<rect x="536.39" y="438.35" width="15.6" height="8.27" fill="#38508e"/>
<rect x="536.39" y="444.82" width="15.6" height="1.8" fill="#1c2c5c" opacity="0.9"/>
<rect x="536.39" y="430.08" width="15.6" height="8.27" fill="#3698b8"/>
<rect x="536.39" y="436.55" width="15.6" height="1.8" fill="#1a6680" opacity="0.9"/>
<rect x="536.39" y="421.80" width="15.6" height="8.27" fill="#c82c2c"/>
<rect x="536.39" y="428.27" width="15.6" height="1.8" fill="#861818" opacity="0.9"/>
<rect x="536.39" y="413.53" width="15.6" height="8.27" fill="#a64c12"/>
<rect x="536.39" y="420.00" width="15.6" height="1.8" fill="#6e3008" opacity="0.9"/>
<rect x="536.39" y="405.25" width="15.6" height="8.27" fill="#f0b214"/>
<rect x="536.39" y="411.72" width="15.6" height="1.8" fill="#a67a08" opacity="0.9"/>
<rect x="536.39" y="396.98" width="15.6" height="8.27" fill="#7aae38"/>
<rect x="536.39" y="403.45" width="15.6" height="1.8" fill="#4e7a1c" opacity="0.9"/>
<rect x="536.39" y="388.70" width="15.6" height="8.27" fill="#40589a"/>
<rect x="536.39" y="395.18" width="15.6" height="1.8" fill="#243470" opacity="0.9"/>
<rect x="536.39" y="380.43" width="15.6" height="8.27" fill="#80b2c8"/>
<rect x="536.39" y="386.90" width="15.6" height="1.8" fill="#5a8aa0" opacity="0.9"/>
<rect x="536.39" y="372.15" width="15.6" height="8.27" fill="#d2727a"/>
<rect x="536.39" y="378.62" width="15.6" height="1.8" fill="#9a4a50" opacity="0.9"/>
<rect x="536.39" y="363.88" width="15.6" height="8.27" fill="#b28268"/>
<rect x="536.39" y="370.35" width="15.6" height="1.8" fill="#7c5640" opacity="0.9"/>
<rect x="536.39" y="355.60" width="15.6" height="8.27" fill="#f4c070"/>
<rect x="536.39" y="362.07" width="15.6" height="1.8" fill="#b08438" opacity="0.9"/>
<rect x="536.39" y="355.60" width="15.6" height="132.40" fill="none" stroke="#2a2018" stroke-opacity="0.45" stroke-width="0.8"/>
<rect x="554.56" y="478.02" width="15.6" height="9.98" fill="#378aa0"/>
<rect x="554.56" y="486.20" width="15.6" height="1.8" fill="#1d5a6c" opacity="0.9"/>
<rect x="554.56" y="468.05" width="15.6" height="9.98" fill="#c0282f"/>
<rect x="554.56" y="476.22" width="15.6" height="1.8" fill="#7a1418" opacity="0.9"/>
<rect x="554.56" y="458.07" width="15.6" height="9.98" fill="#8a3810"/>
<rect x="554.56" y="466.25" width="15.6" height="1.8" fill="#4e1e05" opacity="0.9"/>
<rect x="554.56" y="448.10" width="15.6" height="9.98" fill="#dea01a"/>
<rect x="554.56" y="456.27" width="15.6" height="1.8" fill="#8f6208" opacity="0.9"/>
<rect x="554.56" y="438.12" width="15.6" height="9.98" fill="#72a236"/>
<rect x="554.56" y="446.30" width="15.6" height="1.8" fill="#44661a" opacity="0.9"/>
<rect x="554.56" y="428.15" width="15.6" height="9.98" fill="#38508e"/>
<rect x="554.56" y="436.32" width="15.6" height="1.8" fill="#1c2c5c" opacity="0.9"/>
<rect x="554.56" y="418.17" width="15.6" height="9.98" fill="#3698b8"/>
<rect x="554.56" y="426.35" width="15.6" height="1.8" fill="#1a6680" opacity="0.9"/>
<rect x="554.56" y="408.20" width="15.6" height="9.98" fill="#c82c2c"/>
<rect x="554.56" y="416.37" width="15.6" height="1.8" fill="#861818" opacity="0.9"/>
<rect x="554.56" y="398.22" width="15.6" height="9.98" fill="#a64c12"/>
<rect x="554.56" y="406.40" width="15.6" height="1.8" fill="#6e3008" opacity="0.9"/>
<rect x="554.56" y="388.25" width="15.6" height="9.98" fill="#f0b214"/>
<rect x="554.56" y="396.43" width="15.6" height="1.8" fill="#a67a08" opacity="0.9"/>
<rect x="554.56" y="378.27" width="15.6" height="9.98" fill="#7aae38"/>
<rect x="554.56" y="386.45" width="15.6" height="1.8" fill="#4e7a1c" opacity="0.9"/>
<rect x="554.56" y="368.30" width="15.6" height="9.98" fill="#40589a"/>
<rect x="554.56" y="376.47" width="15.6" height="1.8" fill="#243470" opacity="0.9"/>
<rect x="554.56" y="358.32" width="15.6" height="9.98" fill="#80b2c8"/>
<rect x="554.56" y="366.50" width="15.6" height="1.8" fill="#5a8aa0" opacity="0.9"/>
<rect x="554.56" y="348.35" width="15.6" height="9.98" fill="#d2727a"/>
<rect x="554.56" y="356.52" width="15.6" height="1.8" fill="#9a4a50" opacity="0.9"/>
<rect x="554.56" y="338.37" width="15.6" height="9.98" fill="#b28268"/>
<rect x="554.56" y="346.55" width="15.6" height="1.8" fill="#7c5640" opacity="0.9"/>
<rect x="554.56" y="328.40" width="15.6" height="9.98" fill="#f4c070"/>
<rect x="554.56" y="336.57" width="15.6" height="1.8" fill="#b08438" opacity="0.9"/>
<rect x="554.56" y="328.40" width="15.6" height="159.60" fill="none" stroke="#2a2018" stroke-opacity="0.45" stroke-width="0.8"/>
<rect x="572.72" y="476.57" width="15.6" height="11.43" fill="#378aa0"/>
<rect x="572.72" y="486.20" width="15.6" height="1.8" fill="#1d5a6c" opacity="0.9"/>
<rect x="572.72" y="465.14" width="15.6" height="11.43" fill="#c0282f"/>
<rect x="572.72" y="474.77" width="15.6" height="1.8" fill="#7a1418" opacity="0.9"/>
<rect x="572.72" y="453.71" width="15.6" height="11.43" fill="#8a3810"/>
<rect x="572.72" y="463.34" width="15.6" height="1.8" fill="#4e1e05" opacity="0.9"/>
<rect x="572.72" y="442.28" width="15.6" height="11.43" fill="#dea01a"/>
<rect x="572.72" y="451.91" width="15.6" height="1.8" fill="#8f6208" opacity="0.9"/>
<rect x="572.72" y="430.84" width="15.6" height="11.43" fill="#72a236"/>
<rect x="572.72" y="440.47" width="15.6" height="1.8" fill="#44661a" opacity="0.9"/>
<rect x="572.72" y="419.41" width="15.6" height="11.43" fill="#38508e"/>
<rect x="572.72" y="429.04" width="15.6" height="1.8" fill="#1c2c5c" opacity="0.9"/>
<rect x="572.72" y="407.98" width="15.6" height="11.43" fill="#3698b8"/>
<rect x="572.72" y="417.61" width="15.6" height="1.8" fill="#1a6680" opacity="0.9"/>
<rect x="572.72" y="396.55" width="15.6" height="11.43" fill="#c82c2c"/>
<rect x="572.72" y="406.18" width="15.6" height="1.8" fill="#861818" opacity="0.9"/>
<rect x="572.72" y="385.12" width="15.6" height="11.43" fill="#a64c12"/>
<rect x="572.72" y="394.75" width="15.6" height="1.8" fill="#6e3008" opacity="0.9"/>
<rect x="572.72" y="373.69" width="15.6" height="11.43" fill="#f0b214"/>
<rect x="572.72" y="383.32" width="15.6" height="1.8" fill="#a67a08" opacity="0.9"/>
<rect x="572.72" y="362.26" width="15.6" height="11.43" fill="#7aae38"/>
<rect x="572.72" y="371.89" width="15.6" height="1.8" fill="#4e7a1c" opacity="0.9"/>
<rect x="572.72" y="350.83" width="15.6" height="11.43" fill="#40589a"/>
<rect x="572.72" y="360.46" width="15.6" height="1.8" fill="#243470" opacity="0.9"/>
<rect x="572.72" y="339.39" width="15.6" height="11.43" fill="#80b2c8"/>
<rect x="572.72" y="349.03" width="15.6" height="1.8" fill="#5a8aa0" opacity="0.9"/>
<rect x="572.72" y="327.96" width="15.6" height="11.43" fill="#d2727a"/>
<rect x="572.72" y="337.59" width="15.6" height="1.8" fill="#9a4a50" opacity="0.9"/>
<rect x="572.72" y="316.53" width="15.6" height="11.43" fill="#b28268"/>
<rect x="572.72" y="326.16" width="15.6" height="1.8" fill="#7c5640" opacity="0.9"/>
<rect x="572.72" y="305.10" width="15.6" height="11.43" fill="#f4c070"/>
<rect x="572.72" y="314.73" width="15.6" height="1.8" fill="#b08438" opacity="0.9"/>
<rect x="572.72" y="305.10" width="15.6" height="182.90" fill="none" stroke="#2a2018" stroke-opacity="0.45" stroke-width="0.8"/>
<rect x="590.89" y="475.51" width="15.6" height="12.49" fill="#378aa0"/>
<rect x="590.89" y="486.20" width="15.6" height="1.8" fill="#1d5a6c" opacity="0.9"/>
<rect x="590.89" y="463.02" width="15.6" height="12.49" fill="#c0282f"/>
<rect x="590.89" y="473.71" width="15.6" height="1.8" fill="#7a1418" opacity="0.9"/>
<rect x="590.89" y="450.54" width="15.6" height="12.49" fill="#8a3810"/>
<rect x="590.89" y="461.22" width="15.6" height="1.8" fill="#4e1e05" opacity="0.9"/>
<rect x="590.89" y="438.05" width="15.6" height="12.49" fill="#dea01a"/>
<rect x="590.89" y="448.74" width="15.6" height="1.8" fill="#8f6208" opacity="0.9"/>
<rect x="590.89" y="425.56" width="15.6" height="12.49" fill="#72a236"/>
<rect x="590.89" y="436.25" width="15.6" height="1.8" fill="#44661a" opacity="0.9"/>
<rect x="590.89" y="413.07" width="15.6" height="12.49" fill="#38508e"/>
<rect x="590.89" y="423.76" width="15.6" height="1.8" fill="#1c2c5c" opacity="0.9"/>
<rect x="590.89" y="400.59" width="15.6" height="12.49" fill="#3698b8"/>
<rect x="590.89" y="411.27" width="15.6" height="1.8" fill="#1a6680" opacity="0.9"/>
<rect x="590.89" y="388.10" width="15.6" height="12.49" fill="#c82c2c"/>
<rect x="590.89" y="398.79" width="15.6" height="1.8" fill="#861818" opacity="0.9"/>
<rect x="590.89" y="375.61" width="15.6" height="12.49" fill="#a64c12"/>
<rect x="590.89" y="386.30" width="15.6" height="1.8" fill="#6e3008" opacity="0.9"/>
<rect x="590.89" y="363.12" width="15.6" height="12.49" fill="#f0b214"/>
<rect x="590.89" y="373.81" width="15.6" height="1.8" fill="#a67a08" opacity="0.9"/>
<rect x="590.89" y="350.64" width="15.6" height="12.49" fill="#7aae38"/>
<rect x="590.89" y="361.32" width="15.6" height="1.8" fill="#4e7a1c" opacity="0.9"/>
<rect x="590.89" y="338.15" width="15.6" height="12.49" fill="#40589a"/>
<rect x="590.89" y="348.84" width="15.6" height="1.8" fill="#243470" opacity="0.9"/>
<rect x="590.89" y="325.66" width="15.6" height="12.49" fill="#80b2c8"/>
<rect x="590.89" y="336.35" width="15.6" height="1.8" fill="#5a8aa0" opacity="0.9"/>
<rect x="590.89" y="313.18" width="15.6" height="12.49" fill="#d2727a"/>
<rect x="590.89" y="323.86" width="15.6" height="1.8" fill="#9a4a50" opacity="0.9"/>
<rect x="590.89" y="300.69" width="15.6" height="12.49" fill="#b28268"/>
<rect x="590.89" y="311.37" width="15.6" height="1.8" fill="#7c5640" opacity="0.9"/>
<rect x="590.89" y="288.20" width="15.6" height="12.49" fill="#f4c070"/>
<rect x="590.89" y="298.89" width="15.6" height="1.8" fill="#b08438" opacity="0.9"/>
<rect x="590.89" y="288.20" width="15.6" height="199.80" fill="none" stroke="#2a2018" stroke-opacity="0.45" stroke-width="0.8"/>
<rect x="609.06" y="474.96" width="15.6" height="13.04" fill="#378aa0"/>
<rect x="609.06" y="486.20" width="15.6" height="1.8" fill="#1d5a6c" opacity="0.9"/>
<rect x="609.06" y="461.91" width="15.6" height="13.04" fill="#c0282f"/>
<rect x="609.06" y="473.16" width="15.6" height="1.8" fill="#7a1418" opacity="0.9"/>
<rect x="609.06" y="448.87" width="15.6" height="13.04" fill="#8a3810"/>
<rect x="609.06" y="460.11" width="15.6" height="1.8" fill="#4e1e05" opacity="0.9"/>
<rect x="609.06" y="435.82" width="15.6" height="13.04" fill="#dea01a"/>
<rect x="609.06" y="447.07" width="15.6" height="1.8" fill="#8f6208" opacity="0.9"/>
<rect x="609.06" y="422.78" width="15.6" height="13.04" fill="#72a236"/>
<rect x="609.06" y="434.02" width="15.6" height="1.8" fill="#44661a" opacity="0.9"/>
<rect x="609.06" y="409.74" width="15.6" height="13.04" fill="#38508e"/>
<rect x="609.06" y="420.98" width="15.6" height="1.8" fill="#1c2c5c" opacity="0.9"/>
<rect x="609.06" y="396.69" width="15.6" height="13.04" fill="#3698b8"/>
<rect x="609.06" y="407.94" width="15.6" height="1.8" fill="#1a6680" opacity="0.9"/>
<rect x="609.06" y="383.65" width="15.6" height="13.04" fill="#c82c2c"/>
<rect x="609.06" y="394.89" width="15.6" height="1.8" fill="#861818" opacity="0.9"/>
<rect x="609.06" y="370.61" width="15.6" height="13.04" fill="#a64c12"/>
<rect x="609.06" y="381.85" width="15.6" height="1.8" fill="#6e3008" opacity="0.9"/>
<rect x="609.06" y="357.56" width="15.6" height="13.04" fill="#f0b214"/>
<rect x="609.06" y="368.81" width="15.6" height="1.8" fill="#a67a08" opacity="0.9"/>
<rect x="609.06" y="344.52" width="15.6" height="13.04" fill="#7aae38"/>
<rect x="609.06" y="355.76" width="15.6" height="1.8" fill="#4e7a1c" opacity="0.9"/>
<rect x="609.06" y="331.48" width="15.6" height="13.04" fill="#40589a"/>
<rect x="609.06" y="342.72" width="15.6" height="1.8" fill="#243470" opacity="0.9"/>
<rect x="609.06" y="318.43" width="15.6" height="13.04" fill="#80b2c8"/>
<rect x="609.06" y="329.68" width="15.6" height="1.8" fill="#5a8aa0" opacity="0.9"/>
<rect x="609.06" y="305.39" width="15.6" height="13.04" fill="#d2727a"/>
<rect x="609.06" y="316.63" width="15.6" height="1.8" fill="#9a4a50" opacity="0.9"/>
<rect x="609.06" y="292.34" width="15.6" height="13.04" fill="#b28268"/>
<rect x="609.06" y="303.59" width="15.6" height="1.8" fill="#7c5640" opacity="0.9"/>
<rect x="609.06" y="279.30" width="15.6" height="13.04" fill="#f4c070"/>
<rect x="609.06" y="290.54" width="15.6" height="1.8" fill="#b08438" opacity="0.9"/>
<rect x="609.06" y="279.30" width="15.6" height="208.70" fill="none" stroke="#2a2018" stroke-opacity="0.45" stroke-width="0.8"/>
<rect x="627.22" y="475.02" width="15.6" height="12.98" fill="#378aa0"/>
<rect x="627.22" y="486.20" width="15.6" height="1.8" fill="#1d5a6c" opacity="0.9"/>
<rect x="627.22" y="462.05" width="15.6" height="12.98" fill="#c0282f"/>
<rect x="627.22" y="473.22" width="15.6" height="1.8" fill="#7a1418" opacity="0.9"/>
<rect x="627.22" y="449.07" width="15.6" height="12.98" fill="#8a3810"/>
<rect x="627.22" y="460.25" width="15.6" height="1.8" fill="#4e1e05" opacity="0.9"/>
<rect x="627.22" y="436.10" width="15.6" height="12.98" fill="#dea01a"/>
<rect x="627.22" y="447.27" width="15.6" height="1.8" fill="#8f6208" opacity="0.9"/>
<rect x="627.22" y="423.12" width="15.6" height="12.98" fill="#72a236"/>
<rect x="627.22" y="434.30" width="15.6" height="1.8" fill="#44661a" opacity="0.9"/>
<rect x="627.22" y="410.15" width="15.6" height="12.98" fill="#38508e"/>
<rect x="627.22" y="421.32" width="15.6" height="1.8" fill="#1c2c5c" opacity="0.9"/>
<rect x="627.22" y="397.17" width="15.6" height="12.98" fill="#3698b8"/>
<rect x="627.22" y="408.35" width="15.6" height="1.8" fill="#1a6680" opacity="0.9"/>
<rect x="627.22" y="384.20" width="15.6" height="12.98" fill="#c82c2c"/>
<rect x="627.22" y="395.37" width="15.6" height="1.8" fill="#861818" opacity="0.9"/>
<rect x="627.22" y="371.22" width="15.6" height="12.98" fill="#a64c12"/>
<rect x="627.22" y="382.40" width="15.6" height="1.8" fill="#6e3008" opacity="0.9"/>
<rect x="627.22" y="358.25" width="15.6" height="12.98" fill="#f0b214"/>
<rect x="627.22" y="369.43" width="15.6" height="1.8" fill="#a67a08" opacity="0.9"/>
<rect x="627.22" y="345.27" width="15.6" height="12.98" fill="#7aae38"/>
<rect x="627.22" y="356.45" width="15.6" height="1.8" fill="#4e7a1c" opacity="0.9"/>
<rect x="627.22" y="332.30" width="15.6" height="12.98" fill="#40589a"/>
<rect x="627.22" y="343.47" width="15.6" height="1.8" fill="#243470" opacity="0.9"/>
<rect x="627.22" y="319.32" width="15.6" height="12.98" fill="#80b2c8"/>
<rect x="627.22" y="330.50" width="15.6" height="1.8" fill="#5a8aa0" opacity="0.9"/>
<rect x="627.22" y="306.35" width="15.6" height="12.98" fill="#d2727a"/>
<rect x="627.22" y="317.52" width="15.6" height="1.8" fill="#9a4a50" opacity="0.9"/>
<rect x="627.22" y="293.37" width="15.6" height="12.98" fill="#b28268"/>
<rect x="627.22" y="304.55" width="15.6" height="1.8" fill="#7c5640" opacity="0.9"/>
<rect x="627.22" y="280.40" width="15.6" height="12.98" fill="#f4c070"/>
<rect x="627.22" y="291.57" width="15.6" height="1.8" fill="#b08438" opacity="0.9"/>
<rect x="627.22" y="280.40" width="15.6" height="207.60" fill="none" stroke="#2a2018" stroke-opacity="0.45" stroke-width="0.8"/>
<rect x="645.39" y="475.65" width="15.6" height="12.35" fill="#378aa0"/>
<rect x="645.39" y="486.20" width="15.6" height="1.8" fill="#1d5a6c" opacity="0.9"/>
<rect x="645.39" y="463.30" width="15.6" height="12.35" fill="#c0282f"/>
<rect x="645.39" y="473.85" width="15.6" height="1.8" fill="#7a1418" opacity="0.9"/>
<rect x="645.39" y="450.95" width="15.6" height="12.35" fill="#8a3810"/>
<rect x="645.39" y="461.50" width="15.6" height="1.8" fill="#4e1e05" opacity="0.9"/>
<rect x="645.39" y="438.60" width="15.6" height="12.35" fill="#dea01a"/>
<rect x="645.39" y="449.15" width="15.6" height="1.8" fill="#8f6208" opacity="0.9"/>
<rect x="645.39" y="426.25" width="15.6" height="12.35" fill="#72a236"/>
<rect x="645.39" y="436.80" width="15.6" height="1.8" fill="#44661a" opacity="0.9"/>
<rect x="645.39" y="413.90" width="15.6" height="12.35" fill="#38508e"/>
<rect x="645.39" y="424.45" width="15.6" height="1.8" fill="#1c2c5c" opacity="0.9"/>
<rect x="645.39" y="401.55" width="15.6" height="12.35" fill="#3698b8"/>
<rect x="645.39" y="412.10" width="15.6" height="1.8" fill="#1a6680" opacity="0.9"/>
<rect x="645.39" y="389.20" width="15.6" height="12.35" fill="#c82c2c"/>
<rect x="645.39" y="399.75" width="15.6" height="1.8" fill="#861818" opacity="0.9"/>
<rect x="645.39" y="376.85" width="15.6" height="12.35" fill="#a64c12"/>
<rect x="645.39" y="387.40" width="15.6" height="1.8" fill="#6e3008" opacity="0.9"/>
<rect x="645.39" y="364.50" width="15.6" height="12.35" fill="#f0b214"/>
<rect x="645.39" y="375.05" width="15.6" height="1.8" fill="#a67a08" opacity="0.9"/>
<rect x="645.39" y="352.15" width="15.6" height="12.35" fill="#7aae38"/>
<rect x="645.39" y="362.70" width="15.6" height="1.8" fill="#4e7a1c" opacity="0.9"/>
<rect x="645.39" y="339.80" width="15.6" height="12.35" fill="#40589a"/>
<rect x="645.39" y="350.35" width="15.6" height="1.8" fill="#243470" opacity="0.9"/>
<rect x="645.39" y="327.45" width="15.6" height="12.35" fill="#80b2c8"/>
<rect x="645.39" y="338.00" width="15.6" height="1.8" fill="#5a8aa0" opacity="0.9"/>
<rect x="645.39" y="315.10" width="15.6" height="12.35" fill="#d2727a"/>
<rect x="645.39" y="325.65" width="15.6" height="1.8" fill="#9a4a50" opacity="0.9"/>
<rect x="645.39" y="302.75" width="15.6" height="12.35" fill="#b28268"/>
<rect x="645.39" y="313.30" width="15.6" height="1.8" fill="#7c5640" opacity="0.9"/>
<rect x="645.39" y="290.40" width="15.6" height="12.35" fill="#f4c070"/>
<rect x="645.39" y="300.95" width="15.6" height="1.8" fill="#b08438" opacity="0.9"/>
<rect x="645.39" y="290.40" width="15.6" height="197.60" fill="none" stroke="#2a2018" stroke-opacity="0.45" stroke-width="0.8"/>
<rect x="663.55" y="476.64" width="15.6" height="11.36" fill="#378aa0"/>
<rect x="663.55" y="486.20" width="15.6" height="1.8" fill="#1d5a6c" opacity="0.9"/>
<rect x="663.55" y="465.27" width="15.6" height="11.36" fill="#c0282f"/>
<rect x="663.55" y="474.84" width="15.6" height="1.8" fill="#7a1418" opacity="0.9"/>
<rect x="663.55" y="453.91" width="15.6" height="11.36" fill="#8a3810"/>
<rect x="663.55" y="463.47" width="15.6" height="1.8" fill="#4e1e05" opacity="0.9"/>
<rect x="663.55" y="442.55" width="15.6" height="11.36" fill="#dea01a"/>
<rect x="663.55" y="452.11" width="15.6" height="1.8" fill="#8f6208" opacity="0.9"/>
<rect x="663.55" y="431.19" width="15.6" height="11.36" fill="#72a236"/>
<rect x="663.55" y="440.75" width="15.6" height="1.8" fill="#44661a" opacity="0.9"/>
<rect x="663.55" y="419.82" width="15.6" height="11.36" fill="#38508e"/>
<rect x="663.55" y="429.39" width="15.6" height="1.8" fill="#1c2c5c" opacity="0.9"/>
<rect x="663.55" y="408.46" width="15.6" height="11.36" fill="#3698b8"/>
<rect x="663.55" y="418.02" width="15.6" height="1.8" fill="#1a6680" opacity="0.9"/>
<rect x="663.55" y="397.10" width="15.6" height="11.36" fill="#c82c2c"/>
<rect x="663.55" y="406.66" width="15.6" height="1.8" fill="#861818" opacity="0.9"/>
<rect x="663.55" y="385.74" width="15.6" height="11.36" fill="#a64c12"/>
<rect x="663.55" y="395.30" width="15.6" height="1.8" fill="#6e3008" opacity="0.9"/>
<rect x="663.55" y="374.38" width="15.6" height="11.36" fill="#f0b214"/>
<rect x="663.55" y="383.94" width="15.6" height="1.8" fill="#a67a08" opacity="0.9"/>
<rect x="663.55" y="363.01" width="15.6" height="11.36" fill="#7aae38"/>
<rect x="663.55" y="372.57" width="15.6" height="1.8" fill="#4e7a1c" opacity="0.9"/>
<rect x="663.55" y="351.65" width="15.6" height="11.36" fill="#40589a"/>
<rect x="663.55" y="361.21" width="15.6" height="1.8" fill="#243470" opacity="0.9"/>
<rect x="663.55" y="340.29" width="15.6" height="11.36" fill="#80b2c8"/>
<rect x="663.55" y="349.85" width="15.6" height="1.8" fill="#5a8aa0" opacity="0.9"/>
<rect x="663.55" y="328.93" width="15.6" height="11.36" fill="#d2727a"/>
<rect x="663.55" y="338.49" width="15.6" height="1.8" fill="#9a4a50" opacity="0.9"/>
<rect x="663.55" y="317.56" width="15.6" height="11.36" fill="#b28268"/>
<rect x="663.55" y="327.12" width="15.6" height="1.8" fill="#7c5640" opacity="0.9"/>
<rect x="663.55" y="306.20" width="15.6" height="11.36" fill="#f4c070"/>
<rect x="663.55" y="315.76" width="15.6" height="1.8" fill="#b08438" opacity="0.9"/>
<rect x="663.55" y="306.20" width="15.6" height="181.80" fill="none" stroke="#2a2018" stroke-opacity="0.45" stroke-width="0.8"/>
<rect x="681.72" y="477.94" width="15.6" height="10.06" fill="#378aa0"/>
<rect x="681.72" y="486.20" width="15.6" height="1.8" fill="#1d5a6c" opacity="0.9"/>
<rect x="681.72" y="467.89" width="15.6" height="10.06" fill="#c0282f"/>
<rect x="681.72" y="476.14" width="15.6" height="1.8" fill="#7a1418" opacity="0.9"/>
<rect x="681.72" y="457.83" width="15.6" height="10.06" fill="#8a3810"/>
<rect x="681.72" y="466.09" width="15.6" height="1.8" fill="#4e1e05" opacity="0.9"/>
<rect x="681.72" y="447.78" width="15.6" height="10.06" fill="#dea01a"/>
<rect x="681.72" y="456.03" width="15.6" height="1.8" fill="#8f6208" opacity="0.9"/>
<rect x="681.72" y="437.72" width="15.6" height="10.06" fill="#72a236"/>
<rect x="681.72" y="445.97" width="15.6" height="1.8" fill="#44661a" opacity="0.9"/>
<rect x="681.72" y="427.66" width="15.6" height="10.06" fill="#38508e"/>
<rect x="681.72" y="435.92" width="15.6" height="1.8" fill="#1c2c5c" opacity="0.9"/>
<rect x="681.72" y="417.61" width="15.6" height="10.06" fill="#3698b8"/>
<rect x="681.72" y="425.86" width="15.6" height="1.8" fill="#1a6680" opacity="0.9"/>
<rect x="681.72" y="407.55" width="15.6" height="10.06" fill="#c82c2c"/>
<rect x="681.72" y="415.81" width="15.6" height="1.8" fill="#861818" opacity="0.9"/>
<rect x="681.72" y="397.49" width="15.6" height="10.06" fill="#a64c12"/>
<rect x="681.72" y="405.75" width="15.6" height="1.8" fill="#6e3008" opacity="0.9"/>
<rect x="681.72" y="387.44" width="15.6" height="10.06" fill="#f0b214"/>
<rect x="681.72" y="395.69" width="15.6" height="1.8" fill="#a67a08" opacity="0.9"/>
<rect x="681.72" y="377.38" width="15.6" height="10.06" fill="#7aae38"/>
<rect x="681.72" y="385.64" width="15.6" height="1.8" fill="#4e7a1c" opacity="0.9"/>
<rect x="681.72" y="367.33" width="15.6" height="10.06" fill="#40589a"/>
<rect x="681.72" y="375.58" width="15.6" height="1.8" fill="#243470" opacity="0.9"/>
<rect x="681.72" y="357.27" width="15.6" height="10.06" fill="#80b2c8"/>
<rect x="681.72" y="365.53" width="15.6" height="1.8" fill="#5a8aa0" opacity="0.9"/>
<rect x="681.72" y="347.21" width="15.6" height="10.06" fill="#d2727a"/>
<rect x="681.72" y="355.47" width="15.6" height="1.8" fill="#9a4a50" opacity="0.9"/>
<rect x="681.72" y="337.16" width="15.6" height="10.06" fill="#b28268"/>
<rect x="681.72" y="345.41" width="15.6" height="1.8" fill="#7c5640" opacity="0.9"/>
<rect x="681.72" y="327.10" width="15.6" height="10.06" fill="#f4c070"/>
<rect x="681.72" y="335.36" width="15.6" height="1.8" fill="#b08438" opacity="0.9"/>
<rect x="681.72" y="327.10" width="15.6" height="160.90" fill="none" stroke="#2a2018" stroke-opacity="0.45" stroke-width="0.8"/>
<rect x="699.89" y="479.35" width="15.6" height="8.65" fill="#378aa0"/>
<rect x="699.89" y="486.20" width="15.6" height="1.8" fill="#1d5a6c" opacity="0.9"/>
<rect x="699.89" y="470.70" width="15.6" height="8.65" fill="#c0282f"/>
<rect x="699.89" y="477.55" width="15.6" height="1.8" fill="#7a1418" opacity="0.9"/>
<rect x="699.89" y="462.05" width="15.6" height="8.65" fill="#8a3810"/>
<rect x="699.89" y="468.90" width="15.6" height="1.8" fill="#4e1e05" opacity="0.9"/>
<rect x="699.89" y="453.40" width="15.6" height="8.65" fill="#dea01a"/>
<rect x="699.89" y="460.25" width="15.6" height="1.8" fill="#8f6208" opacity="0.9"/>
<rect x="699.89" y="444.75" width="15.6" height="8.65" fill="#72a236"/>
<rect x="699.89" y="451.60" width="15.6" height="1.8" fill="#44661a" opacity="0.9"/>
<rect x="699.89" y="436.10" width="15.6" height="8.65" fill="#38508e"/>
<rect x="699.89" y="442.95" width="15.6" height="1.8" fill="#1c2c5c" opacity="0.9"/>
<rect x="699.89" y="427.45" width="15.6" height="8.65" fill="#3698b8"/>
<rect x="699.89" y="434.30" width="15.6" height="1.8" fill="#1a6680" opacity="0.9"/>
<rect x="699.89" y="418.80" width="15.6" height="8.65" fill="#c82c2c"/>
<rect x="699.89" y="425.65" width="15.6" height="1.8" fill="#861818" opacity="0.9"/>
<rect x="699.89" y="410.15" width="15.6" height="8.65" fill="#a64c12"/>
<rect x="699.89" y="417.00" width="15.6" height="1.8" fill="#6e3008" opacity="0.9"/>
<rect x="699.89" y="401.50" width="15.6" height="8.65" fill="#f0b214"/>
<rect x="699.89" y="408.35" width="15.6" height="1.8" fill="#a67a08" opacity="0.9"/>
<rect x="699.89" y="392.85" width="15.6" height="8.65" fill="#7aae38"/>
<rect x="699.89" y="399.70" width="15.6" height="1.8" fill="#4e7a1c" opacity="0.9"/>
<rect x="699.89" y="384.20" width="15.6" height="8.65" fill="#40589a"/>
<rect x="699.89" y="391.05" width="15.6" height="1.8" fill="#243470" opacity="0.9"/>
<rect x="699.89" y="375.55" width="15.6" height="8.65" fill="#80b2c8"/>
<rect x="699.89" y="382.40" width="15.6" height="1.8" fill="#5a8aa0" opacity="0.9"/>
<rect x="699.89" y="366.90" width="15.6" height="8.65" fill="#d2727a"/>
<rect x="699.89" y="373.75" width="15.6" height="1.8" fill="#9a4a50" opacity="0.9"/>
<rect x="699.89" y="358.25" width="15.6" height="8.65" fill="#b28268"/>
<rect x="699.89" y="365.10" width="15.6" height="1.8" fill="#7c5640" opacity="0.9"/>
<rect x="699.89" y="349.60" width="15.6" height="8.65" fill="#f4c070"/>
<rect x="699.89" y="356.45" width="15.6" height="1.8" fill="#b08438" opacity="0.9"/>
<rect x="699.89" y="349.60" width="15.6" height="138.40" fill="none" stroke="#2a2018" stroke-opacity="0.45" stroke-width="0.8"/>
<rect x="718.05" y="480.51" width="15.6" height="7.49" fill="#378aa0"/>
<rect x="718.05" y="486.20" width="15.6" height="1.8" fill="#1d5a6c" opacity="0.9"/>
<rect x="718.05" y="473.02" width="15.6" height="7.49" fill="#c0282f"/>
<rect x="718.05" y="478.71" width="15.6" height="1.8" fill="#7a1418" opacity="0.9"/>
<rect x="718.05" y="465.54" width="15.6" height="7.49" fill="#8a3810"/>
<rect x="718.05" y="471.22" width="15.6" height="1.8" fill="#4e1e05" opacity="0.9"/>
<rect x="718.05" y="458.05" width="15.6" height="7.49" fill="#dea01a"/>
<rect x="718.05" y="463.74" width="15.6" height="1.8" fill="#8f6208" opacity="0.9"/>
<rect x="718.05" y="450.56" width="15.6" height="7.49" fill="#72a236"/>
<rect x="718.05" y="456.25" width="15.6" height="1.8" fill="#44661a" opacity="0.9"/>
<rect x="718.05" y="443.07" width="15.6" height="7.49" fill="#38508e"/>
<rect x="718.05" y="448.76" width="15.6" height="1.8" fill="#1c2c5c" opacity="0.9"/>
<rect x="718.05" y="435.59" width="15.6" height="7.49" fill="#3698b8"/>
<rect x="718.05" y="441.27" width="15.6" height="1.8" fill="#1a6680" opacity="0.9"/>
<rect x="718.05" y="428.10" width="15.6" height="7.49" fill="#c82c2c"/>
<rect x="718.05" y="433.79" width="15.6" height="1.8" fill="#861818" opacity="0.9"/>
<rect x="718.05" y="420.61" width="15.6" height="7.49" fill="#a64c12"/>
<rect x="718.05" y="426.30" width="15.6" height="1.8" fill="#6e3008" opacity="0.9"/>
<rect x="718.05" y="413.12" width="15.6" height="7.49" fill="#f0b214"/>
<rect x="718.05" y="418.81" width="15.6" height="1.8" fill="#a67a08" opacity="0.9"/>
<rect x="718.05" y="405.64" width="15.6" height="7.49" fill="#7aae38"/>
<rect x="718.05" y="411.32" width="15.6" height="1.8" fill="#4e7a1c" opacity="0.9"/>
<rect x="718.05" y="398.15" width="15.6" height="7.49" fill="#40589a"/>
<rect x="718.05" y="403.84" width="15.6" height="1.8" fill="#243470" opacity="0.9"/>
<rect x="718.05" y="390.66" width="15.6" height="7.49" fill="#80b2c8"/>
<rect x="718.05" y="396.35" width="15.6" height="1.8" fill="#5a8aa0" opacity="0.9"/>
<rect x="718.05" y="383.18" width="15.6" height="7.49" fill="#d2727a"/>
<rect x="718.05" y="388.86" width="15.6" height="1.8" fill="#9a4a50" opacity="0.9"/>
<rect x="718.05" y="375.69" width="15.6" height="7.49" fill="#b28268"/>
<rect x="718.05" y="381.37" width="15.6" height="1.8" fill="#7c5640" opacity="0.9"/>
<rect x="718.05" y="368.20" width="15.6" height="7.49" fill="#f4c070"/>
<rect x="718.05" y="373.89" width="15.6" height="1.8" fill="#b08438" opacity="0.9"/>
<rect x="718.05" y="368.20" width="15.6" height="119.80" fill="none" stroke="#2a2018" stroke-opacity="0.45" stroke-width="0.8"/>
<rect x="736.22" y="481.46" width="15.6" height="6.54" fill="#378aa0"/>
<rect x="736.22" y="486.20" width="15.6" height="1.8" fill="#1d5a6c" opacity="0.9"/>
<rect x="736.22" y="474.91" width="15.6" height="6.54" fill="#c0282f"/>
<rect x="736.22" y="479.66" width="15.6" height="1.8" fill="#7a1418" opacity="0.9"/>
<rect x="736.22" y="468.37" width="15.6" height="6.54" fill="#8a3810"/>
<rect x="736.22" y="473.11" width="15.6" height="1.8" fill="#4e1e05" opacity="0.9"/>
<rect x="736.22" y="461.82" width="15.6" height="6.54" fill="#dea01a"/>
<rect x="736.22" y="466.57" width="15.6" height="1.8" fill="#8f6208" opacity="0.9"/>
<rect x="736.22" y="455.28" width="15.6" height="6.54" fill="#72a236"/>
<rect x="736.22" y="460.02" width="15.6" height="1.8" fill="#44661a" opacity="0.9"/>
<rect x="736.22" y="448.74" width="15.6" height="6.54" fill="#38508e"/>
<rect x="736.22" y="453.48" width="15.6" height="1.8" fill="#1c2c5c" opacity="0.9"/>
<rect x="736.22" y="442.19" width="15.6" height="6.54" fill="#3698b8"/>
<rect x="736.22" y="446.94" width="15.6" height="1.8" fill="#1a6680" opacity="0.9"/>
<rect x="736.22" y="435.65" width="15.6" height="6.54" fill="#c82c2c"/>
<rect x="736.22" y="440.39" width="15.6" height="1.8" fill="#861818" opacity="0.9"/>
<rect x="736.22" y="429.11" width="15.6" height="6.54" fill="#a64c12"/>
<rect x="736.22" y="433.85" width="15.6" height="1.8" fill="#6e3008" opacity="0.9"/>
<rect x="736.22" y="422.56" width="15.6" height="6.54" fill="#f0b214"/>
<rect x="736.22" y="427.31" width="15.6" height="1.8" fill="#a67a08" opacity="0.9"/>
<rect x="736.22" y="416.02" width="15.6" height="6.54" fill="#7aae38"/>
<rect x="736.22" y="420.76" width="15.6" height="1.8" fill="#4e7a1c" opacity="0.9"/>
<rect x="736.22" y="409.48" width="15.6" height="6.54" fill="#40589a"/>
<rect x="736.22" y="414.22" width="15.6" height="1.8" fill="#243470" opacity="0.9"/>
<rect x="736.22" y="402.93" width="15.6" height="6.54" fill="#80b2c8"/>
<rect x="736.22" y="407.68" width="15.6" height="1.8" fill="#5a8aa0" opacity="0.9"/>
<rect x="736.22" y="396.39" width="15.6" height="6.54" fill="#d2727a"/>
<rect x="736.22" y="401.13" width="15.6" height="1.8" fill="#9a4a50" opacity="0.9"/>
<rect x="736.22" y="389.84" width="15.6" height="6.54" fill="#b28268"/>
<rect x="736.22" y="394.59" width="15.6" height="1.8" fill="#7c5640" opacity="0.9"/>
<rect x="736.22" y="383.30" width="15.6" height="6.54" fill="#f4c070"/>
<rect x="736.22" y="388.04" width="15.6" height="1.8" fill="#b08438" opacity="0.9"/>
<rect x="736.22" y="383.30" width="15.6" height="104.70" fill="none" stroke="#2a2018" stroke-opacity="0.45" stroke-width="0.8"/>
<line x1="317.8" y1="270.30" x2="317.8" y2="497.00" stroke="#5a5a5a" stroke-width="1.3"/>
<line x1="317.80" y1="488.00" x2="317.80" y2="497.00" stroke="#6a6a6a" stroke-width="1.1"/>
<text x="326.00" y="513.5" text-anchor="middle" font-size="8.6" fill="#111" stroke="#111" stroke-width="0.25" font-family="Liberation Sans">1</text>
<line x1="335.97" y1="488.00" x2="335.97" y2="497.00" stroke="#6a6a6a" stroke-width="1.1"/>
<text x="344.17" y="513.5" text-anchor="middle" font-size="8.6" fill="#111" stroke="#111" stroke-width="0.25" font-family="Liberation Sans">2</text>
<line x1="354.13" y1="488.00" x2="354.13" y2="497.00" stroke="#6a6a6a" stroke-width="1.1"/>
<text x="362.33" y="513.5" text-anchor="middle" font-size="8.6" fill="#111" stroke="#111" stroke-width="0.25" font-family="Liberation Sans">3</text>
<line x1="372.30" y1="488.00" x2="372.30" y2="497.00" stroke="#6a6a6a" stroke-width="1.1"/>
<text x="380.50" y="513.5" text-anchor="middle" font-size="8.6" fill="#111" stroke="#111" stroke-width="0.25" font-family="Liberation Sans">4</text>
<line x1="390.46" y1="488.00" x2="390.46" y2="497.00" stroke="#6a6a6a" stroke-width="1.1"/>
<text x="398.66" y="513.5" text-anchor="middle" font-size="8.6" fill="#111" stroke="#111" stroke-width="0.25" font-family="Liberation Sans">5</text>
<line x1="408.63" y1="488.00" x2="408.63" y2="497.00" stroke="#6a6a6a" stroke-width="1.1"/>
<text x="416.83" y="513.5" text-anchor="middle" font-size="8.6" fill="#111" stroke="#111" stroke-width="0.25" font-family="Liberation Sans">6</text>
<line x1="426.80" y1="488.00" x2="426.80" y2="497.00" stroke="#6a6a6a" stroke-width="1.1"/>
<text x="435.00" y="513.5" text-anchor="middle" font-size="8.6" fill="#111" stroke="#111" stroke-width="0.25" font-family="Liberation Sans">7</text>
<line x1="444.96" y1="488.00" x2="444.96" y2="497.00" stroke="#6a6a6a" stroke-width="1.1"/>
<text x="453.16" y="513.5" text-anchor="middle" font-size="8.6" fill="#111" stroke="#111" stroke-width="0.25" font-family="Liberation Sans">8</text>
<line x1="463.13" y1="488.00" x2="463.13" y2="497.00" stroke="#6a6a6a" stroke-width="1.1"/>
<text x="471.33" y="513.5" text-anchor="middle" font-size="8.6" fill="#111" stroke="#111" stroke-width="0.25" font-family="Liberation Sans">9</text>
<line x1="481.29" y1="488.00" x2="481.29" y2="497.00" stroke="#6a6a6a" stroke-width="1.1"/>
<text x="489.49" y="513.5" text-anchor="middle" font-size="8.6" fill="#111" stroke="#111" stroke-width="0.25" font-family="Liberation Sans">10</text>
<line x1="499.46" y1="488.00" x2="499.46" y2="497.00" stroke="#6a6a6a" stroke-width="1.1"/>
<text x="507.66" y="513.5" text-anchor="middle" font-size="8.6" fill="#111" stroke="#111" stroke-width="0.25" font-family="Liberation Sans">11</text>
<line x1="517.63" y1="488.00" x2="517.63" y2="497.00" stroke="#6a6a6a" stroke-width="1.1"/>
<text x="525.83" y="513.5" text-anchor="middle" font-size="8.6" fill="#111" stroke="#111" stroke-width="0.25" font-family="Liberation Sans">12</text>
<line x1="535.79" y1="488.00" x2="535.79" y2="497.00" stroke="#6a6a6a" stroke-width="1.1"/>
<text x="543.99" y="513.5" text-anchor="middle" font-size="8.6" fill="#111" stroke="#111" stroke-width="0.25" font-family="Liberation Sans">13</text>
<line x1="553.96" y1="488.00" x2="553.96" y2="497.00" stroke="#6a6a6a" stroke-width="1.1"/>
<text x="562.16" y="513.5" text-anchor="middle" font-size="8.6" fill="#111" stroke="#111" stroke-width="0.25" font-family="Liberation Sans">14</text>
<line x1="572.12" y1="488.00" x2="572.12" y2="497.00" stroke="#6a6a6a" stroke-width="1.1"/>
<text x="580.32" y="513.5" text-anchor="middle" font-size="8.6" fill="#111" stroke="#111" stroke-width="0.25" font-family="Liberation Sans">15</text>
<line x1="590.29" y1="488.00" x2="590.29" y2="497.00" stroke="#6a6a6a" stroke-width="1.1"/>
<text x="598.49" y="513.5" text-anchor="middle" font-size="8.6" fill="#111" stroke="#111" stroke-width="0.25" font-family="Liberation Sans">16</text>
<line x1="608.46" y1="488.00" x2="608.46" y2="497.00" stroke="#6a6a6a" stroke-width="1.1"/>
<text x="616.66" y="513.5" text-anchor="middle" font-size="8.6" fill="#111" stroke="#111" stroke-width="0.25" font-family="Liberation Sans">17</text>
<line x1="626.62" y1="488.00" x2="626.62" y2="497.00" stroke="#6a6a6a" stroke-width="1.1"/>
<text x="634.82" y="513.5" text-anchor="middle" font-size="8.6" fill="#111" stroke="#111" stroke-width="0.25" font-family="Liberation Sans">18</text>
<line x1="644.79" y1="488.00" x2="644.79" y2="497.00" stroke="#6a6a6a" stroke-width="1.1"/>
<text x="652.99" y="513.5" text-anchor="middle" font-size="8.6" fill="#111" stroke="#111" stroke-width="0.25" font-family="Liberation Sans">19</text>
<line x1="662.95" y1="488.00" x2="662.95" y2="497.00" stroke="#6a6a6a" stroke-width="1.1"/>
<text x="671.15" y="513.5" text-anchor="middle" font-size="8.6" fill="#111" stroke="#111" stroke-width="0.25" font-family="Liberation Sans">20</text>
<line x1="681.12" y1="488.00" x2="681.12" y2="497.00" stroke="#6a6a6a" stroke-width="1.1"/>
<text x="689.32" y="513.5" text-anchor="middle" font-size="8.6" fill="#111" stroke="#111" stroke-width="0.25" font-family="Liberation Sans">21</text>
<line x1="699.29" y1="488.00" x2="699.29" y2="497.00" stroke="#6a6a6a" stroke-width="1.1"/>
<text x="707.49" y="513.5" text-anchor="middle" font-size="8.6" fill="#111" stroke="#111" stroke-width="0.25" font-family="Liberation Sans">22</text>
<line x1="717.45" y1="488.00" x2="717.45" y2="497.00" stroke="#6a6a6a" stroke-width="1.1"/>
<text x="725.65" y="513.5" text-anchor="middle" font-size="8.6" fill="#111" stroke="#111" stroke-width="0.25" font-family="Liberation Sans">23</text>
<line x1="735.62" y1="488.00" x2="735.62" y2="497.00" stroke="#6a6a6a" stroke-width="1.1"/>
<text x="743.82" y="513.5" text-anchor="middle" font-size="8.6" fill="#111" stroke="#111" stroke-width="0.25" font-family="Liberation Sans">24</text>
<line x1="753.78" y1="488.00" x2="753.78" y2="497.00" stroke="#6a6a6a" stroke-width="1.1"/>
<text x="322" y="255" text-anchor="middle" font-size="8.6" font-weight="bold" fill="#222" font-family="Liberation Sans">W</text>
<text x="542" y="538" text-anchor="middle" font-size="8" font-weight="bold" fill="#222" font-family="Liberation Sans">Ora</text>
</svg>
<div class="a" style="left:327px;top:561.0px;width:25px;height:10px;background:#378aa0;border:1px solid #1d5a6c"></div>
<div class="t" style="left:354px;top:561.5px">Soggiorno/Sala da pranzo</div>
<div class="a" style="left:466px;top:561.0px;width:25px;height:10px;background:#c0282f;border:1px solid #7a1418"></div>
<div class="t" style="left:493px;top:561.5px">Cucina</div>
<div class="a" style="left:546px;top:561.0px;width:25px;height:10px;background:#8a3810;border:1px solid #4e1e05"></div>
<div class="t" style="left:573px;top:561.5px">Camera 1</div>
<div class="a" style="left:626px;top:561.0px;width:25px;height:10px;background:#dea01a;border:1px solid #8f6208"></div>
<div class="t" style="left:653px;top:561.5px">Camera 2</div>
<div class="a" style="left:327px;top:576.2px;width:25px;height:10px;background:#72a236;border:1px solid #44661a"></div>
<div class="t" style="left:354px;top:576.7px">Camera 3</div>
<div class="a" style="left:466px;top:576.2px;width:25px;height:10px;background:#38508e;border:1px solid #1c2c5c"></div>
<div class="t" style="left:493px;top:576.7px">Bagno 2</div>
<div class="a" style="left:546px;top:576.2px;width:25px;height:10px;background:#3698b8;border:1px solid #1a6680"></div>
<div class="t" style="left:573px;top:576.7px">Bagno 1</div>
<div class="a" style="left:626px;top:576.2px;width:25px;height:10px;background:#c82c2c;border:1px solid #861818"></div>
<div class="t" style="left:653px;top:576.7px">Disimpegno</div>
<div class="a" style="left:327px;top:591.4px;width:25px;height:10px;background:#a64c12;border:1px solid #6e3008"></div>
<div class="t" style="left:354px;top:591.9px">Cucina B</div>
<div class="a" style="left:466px;top:591.4px;width:25px;height:10px;background:#f0b214;border:1px solid #a67a08"></div>
<div class="t" style="left:493px;top:591.9px">Camera 1B</div>
<div class="a" style="left:546px;top:591.4px;width:25px;height:10px;background:#7aae38;border:1px solid #4e7a1c"></div>
<div class="t" style="left:573px;top:591.9px">Camera 2B</div>
<div class="a" style="left:626px;top:591.4px;width:25px;height:10px;background:#40589a;border:1px solid #243470"></div>
<div class="t" style="left:653px;top:591.9px">Camera 3B</div>
<div class="a" style="left:327px;top:606.6px;width:25px;height:10px;background:#80b2c8;border:1px solid #5a8aa0"></div>
<div class="t" style="left:354px;top:607.1px">Soggiorno/Sala da pranzo B</div>
<div class="a" style="left:466px;top:606.6px;width:25px;height:10px;background:#d2727a;border:1px solid #9a4a50"></div>
<div class="t" style="left:493px;top:607.1px">Bagno 2B</div>
<div class="a" style="left:546px;top:606.6px;width:25px;height:10px;background:#b28268;border:1px solid #7c5640"></div>
<div class="t" style="left:573px;top:607.1px">Bagno 1B</div>
<div class="a" style="left:626px;top:606.6px;width:25px;height:10px;background:#f4c070;border:1px solid #b08438"></div>
<div class="t" style="left:653px;top:607.1px">Disimpegno B</div>
<div class="a" style="left:31px;top:131.0px;width:1px;height:176.6px;border-left:1px solid #c4c4c4"></div>
<div class="a" style="left:46px;top:143.9px;width:1px;height:125.0px;border-left:1px solid #c4c4c4"></div>
<div class="a" style="left:46px;top:311.6px;width:1px;height:8.9px;border-left:1px solid #c4c4c4"></div>
<div class="a" style="left:61px;top:156.8px;width:1px;height:21.8px;border-left:1px solid #c4c4c4"></div>
<div class="a" style="left:61px;top:195.5px;width:1px;height:21.8px;border-left:1px solid #c4c4c4"></div>
<div class="a" style="left:61px;top:234.2px;width:1px;height:21.8px;border-left:1px solid #c4c4c4"></div>
<div class="a" style="left:61px;top:272.9px;width:1px;height:21.8px;border-left:1px solid #c4c4c4"></div>
<div class="a" style="left:61px;top:324.5px;width:1px;height:99.2px;border-left:1px solid #c4c4c4"></div>
<svg class="a" style="left:25px;top:122.0px" width="12" height="10" viewBox="0 0 12 10"><path d="M6 0.5 L11.5 4.5 L10 4.5 L10 9.5 L2 9.5 L2 4.5 L0.5 4.5 Z" fill="#5a7898" stroke="#2e4a6a" stroke-width="1"/><rect x="5" y="3.5" width="2" height="3" fill="#dfe8f2"/></svg>
<div class="t" style="left:41.5px;top:121.8px;color:#000;-webkit-text-stroke-width:0.25px">Ipotesi di zonificazione</div>
<div class="a" style="left:31px;top:139.0px;width:9px;height:1px;border-top:1px solid #c4c4c4"></div>
<div class="a" style="left:28.0px;top:136.4px;width:7px;height:7px;border:1px solid #c0c0c0;background:#fff"></div>
<div class="a" style="left:30.0px;top:139.4px;width:4px;height:1px;background:#555"></div>
<svg class="a" style="left:40px;top:134.9px" width="12" height="10" viewBox="0 0 12 10"><path d="M6 0.5 L11.5 4.5 L10 4.5 L10 9.5 L2 9.5 L2 4.5 L0.5 4.5 Z" fill="#6a88a8" stroke="#3a5a7a" stroke-width="1"/><rect x="3.5" y="4.5" width="2" height="2" fill="#e8eef5"/></svg>
<div class="t" style="left:56.5px;top:134.7px;color:#000;-webkit-text-stroke-width:0.25px">Per piano</div>
<div class="a" style="left:46px;top:152.0px;width:9px;height:1px;border-top:1px solid #c4c4c4"></div>
<div class="a" style="left:43.0px;top:149.3px;width:7px;height:7px;border:1px solid #c0c0c0;background:#fff"></div>
<div class="a" style="left:45.0px;top:152.3px;width:4px;height:1px;background:#555"></div>
<svg class="a" style="left:55px;top:147.8px" width="11" height="10" viewBox="0 0 11 10"><path d="M5.5 0.5 L10.5 4.5 L9 4.5 L9 9.5 L2 9.5 L2 4.5 L0.5 4.5 Z" fill="#e4e8f4" stroke="#7888a8" stroke-width="1"/></svg>
<div class="t" style="left:71.5px;top:147.6px;color:#000;-webkit-text-stroke-width:0.25px">Zona 1</div>
<div class="a" style="left:61px;top:165.0px;width:9px;height:1px;border-top:1px solid #c4c4c4"></div>
<div class="a" style="left:58.0px;top:162.2px;width:7px;height:7px;border:1px solid #c0c0c0;background:#fff"></div>
<div class="a" style="left:60.0px;top:165.2px;width:4px;height:1px;background:#555"></div>
<div class="a" style="left:61.0px;top:163.2px;width:1px;height:4px;background:#555"></div>
<svg class="a" style="left:69px;top:160.7px" width="13" height="10" viewBox="0 0 13 10"><path d="M1.5 5 C1.5 2.5 4 1 7 1 C10 1 12 2 12 4 L11.5 6.5 L7 9.3 L1.5 8.3 Z" fill="#d4dcec" stroke="#4a5a7a" stroke-width="0.9"/><path d="M1.5 5 L7 6 L12 4 M7 6 L7 9.3" fill="none" stroke="#4a5a7a" stroke-width="0.8"/><path d="M3 3.3 C4.5 2 8 1.8 10.5 2.8" fill="none" stroke="#7a8aaa" stroke-width="0.9"/><path d="M3 6.5 L3 8 M4.8 6.8 L4.8 8.4" stroke="#6a7a9a" stroke-width="0.7"/></svg>
<div class="t" style="left:86.5px;top:160.5px;color:#000;-webkit-text-stroke-width:0.25px">Unità immobiliare 1</div>
<div class="a" style="left:61px;top:178.0px;width:9px;height:1px;border-top:1px solid #c4c4c4"></div>
<div class="a" style="left:58.0px;top:175.1px;width:7px;height:7px;border:1px solid #c0c0c0;background:#fff"></div>
<div class="a" style="left:60.0px;top:178.1px;width:4px;height:1px;background:#555"></div>
<div class="a" style="left:61.0px;top:176.1px;width:1px;height:4px;background:#555"></div>
<svg class="a" style="left:69px;top:173.6px" width="13" height="10" viewBox="0 0 13 10"><path d="M1.5 5 C1.5 2.5 4 1 7 1 C10 1 12 2 12 4 L11.5 6.5 L7 9.3 L1.5 8.3 Z" fill="#d4dcec" stroke="#4a5a7a" stroke-width="0.9"/><path d="M1.5 5 L7 6 L12 4 M7 6 L7 9.3" fill="none" stroke="#4a5a7a" stroke-width="0.8"/><path d="M3 3.3 C4.5 2 8 1.8 10.5 2.8" fill="none" stroke="#7a8aaa" stroke-width="0.9"/><path d="M3 6.5 L3 8 M4.8 6.8 L4.8 8.4" stroke="#6a7a9a" stroke-width="0.7"/></svg>
<div class="t" style="left:86.5px;top:173.4px;color:#000;-webkit-text-stroke-width:0.25px">Unità immobiliare 2</div>
<div class="a" style="left:46px;top:191.0px;width:9px;height:1px;border-top:1px solid #c4c4c4"></div>
<div class="a" style="left:43.0px;top:188.0px;width:7px;height:7px;border:1px solid #c0c0c0;background:#fff"></div>
<div class="a" style="left:45.0px;top:191.0px;width:4px;height:1px;background:#555"></div>
<svg class="a" style="left:55px;top:186.5px" width="11" height="10" viewBox="0 0 11 10"><path d="M5.5 0.5 L10.5 4.5 L9 4.5 L9 9.5 L2 9.5 L2 4.5 L0.5 4.5 Z" fill="#e4e8f4" stroke="#7888a8" stroke-width="1"/></svg>
<div class="t" style="left:71.5px;top:186.3px;color:#000;-webkit-text-stroke-width:0.25px">Zona 2</div>
<div class="a" style="left:61px;top:204.0px;width:9px;height:1px;border-top:1px solid #c4c4c4"></div>
<div class="a" style="left:58.0px;top:200.9px;width:7px;height:7px;border:1px solid #c0c0c0;background:#fff"></div>
<div class="a" style="left:60.0px;top:203.9px;width:4px;height:1px;background:#555"></div>
<div class="a" style="left:61.0px;top:201.9px;width:1px;height:4px;background:#555"></div>
<svg class="a" style="left:69px;top:199.4px" width="13" height="10" viewBox="0 0 13 10"><path d="M1.5 5 C1.5 2.5 4 1 7 1 C10 1 12 2 12 4 L11.5 6.5 L7 9.3 L1.5 8.3 Z" fill="#d4dcec" stroke="#4a5a7a" stroke-width="0.9"/><path d="M1.5 5 L7 6 L12 4 M7 6 L7 9.3" fill="none" stroke="#4a5a7a" stroke-width="0.8"/><path d="M3 3.3 C4.5 2 8 1.8 10.5 2.8" fill="none" stroke="#7a8aaa" stroke-width="0.9"/><path d="M3 6.5 L3 8 M4.8 6.8 L4.8 8.4" stroke="#6a7a9a" stroke-width="0.7"/></svg>
<div class="t" style="left:86.5px;top:199.2px;color:#000;-webkit-text-stroke-width:0.25px">Unità immobiliare 3</div>
<div class="a" style="left:61px;top:217.0px;width:9px;height:1px;border-top:1px solid #c4c4c4"></div>
<div class="a" style="left:58.0px;top:213.8px;width:7px;height:7px;border:1px solid #c0c0c0;background:#fff"></div>
<div class="a" style="left:60.0px;top:216.8px;width:4px;height:1px;background:#555"></div>
<div class="a" style="left:61.0px;top:214.8px;width:1px;height:4px;background:#555"></div>
<svg class="a" style="left:69px;top:212.3px" width="13" height="10" viewBox="0 0 13 10"><path d="M1.5 5 C1.5 2.5 4 1 7 1 C10 1 12 2 12 4 L11.5 6.5 L7 9.3 L1.5 8.3 Z" fill="#d4dcec" stroke="#4a5a7a" stroke-width="0.9"/><path d="M1.5 5 L7 6 L12 4 M7 6 L7 9.3" fill="none" stroke="#4a5a7a" stroke-width="0.8"/><path d="M3 3.3 C4.5 2 8 1.8 10.5 2.8" fill="none" stroke="#7a8aaa" stroke-width="0.9"/><path d="M3 6.5 L3 8 M4.8 6.8 L4.8 8.4" stroke="#6a7a9a" stroke-width="0.7"/></svg>
<div class="t" style="left:86.5px;top:212.1px;color:#000;-webkit-text-stroke-width:0.25px">Unità immobiliare 4</div>
<div class="a" style="left:46px;top:230.0px;width:9px;height:1px;border-top:1px solid #c4c4c4"></div>
<div class="a" style="left:43.0px;top:226.7px;width:7px;height:7px;border:1px solid #c0c0c0;background:#fff"></div>
<div class="a" style="left:45.0px;top:229.7px;width:4px;height:1px;background:#555"></div>
<svg class="a" style="left:55px;top:225.2px" width="11" height="10" viewBox="0 0 11 10"><path d="M5.5 0.5 L10.5 4.5 L9 4.5 L9 9.5 L2 9.5 L2 4.5 L0.5 4.5 Z" fill="#e4e8f4" stroke="#7888a8" stroke-width="1"/></svg>
<div class="t" style="left:71.5px;top:225.0px;color:#000;-webkit-text-stroke-width:0.25px">Zona 3</div>
<div class="a" style="left:61px;top:243.0px;width:9px;height:1px;border-top:1px solid #c4c4c4"></div>
<div class="a" style="left:58.0px;top:239.6px;width:7px;height:7px;border:1px solid #c0c0c0;background:#fff"></div>
<div class="a" style="left:60.0px;top:242.6px;width:4px;height:1px;background:#555"></div>
<div class="a" style="left:61.0px;top:240.6px;width:1px;height:4px;background:#555"></div>
<svg class="a" style="left:69px;top:238.1px" width="13" height="10" viewBox="0 0 13 10"><path d="M1.5 5 C1.5 2.5 4 1 7 1 C10 1 12 2 12 4 L11.5 6.5 L7 9.3 L1.5 8.3 Z" fill="#d4dcec" stroke="#4a5a7a" stroke-width="0.9"/><path d="M1.5 5 L7 6 L12 4 M7 6 L7 9.3" fill="none" stroke="#4a5a7a" stroke-width="0.8"/><path d="M3 3.3 C4.5 2 8 1.8 10.5 2.8" fill="none" stroke="#7a8aaa" stroke-width="0.9"/><path d="M3 6.5 L3 8 M4.8 6.8 L4.8 8.4" stroke="#6a7a9a" stroke-width="0.7"/></svg>
<div class="t" style="left:86.5px;top:237.9px;color:#000;-webkit-text-stroke-width:0.25px">Unità immobiliare 5</div>
<div class="a" style="left:61px;top:256.0px;width:9px;height:1px;border-top:1px solid #c4c4c4"></div>
<div class="a" style="left:58.0px;top:252.5px;width:7px;height:7px;border:1px solid #c0c0c0;background:#fff"></div>
<div class="a" style="left:60.0px;top:255.5px;width:4px;height:1px;background:#555"></div>
<div class="a" style="left:61.0px;top:253.5px;width:1px;height:4px;background:#555"></div>
<svg class="a" style="left:69px;top:251.0px" width="13" height="10" viewBox="0 0 13 10"><path d="M1.5 5 C1.5 2.5 4 1 7 1 C10 1 12 2 12 4 L11.5 6.5 L7 9.3 L1.5 8.3 Z" fill="#d4dcec" stroke="#4a5a7a" stroke-width="0.9"/><path d="M1.5 5 L7 6 L12 4 M7 6 L7 9.3" fill="none" stroke="#4a5a7a" stroke-width="0.8"/><path d="M3 3.3 C4.5 2 8 1.8 10.5 2.8" fill="none" stroke="#7a8aaa" stroke-width="0.9"/><path d="M3 6.5 L3 8 M4.8 6.8 L4.8 8.4" stroke="#6a7a9a" stroke-width="0.7"/></svg>
<div class="t" style="left:86.5px;top:250.8px;color:#000;-webkit-text-stroke-width:0.25px">Unità immobiliare 6</div>
<div class="a" style="left:46px;top:268.0px;width:9px;height:1px;border-top:1px solid #c4c4c4"></div>
<div class="a" style="left:43.0px;top:265.4px;width:7px;height:7px;border:1px solid #c0c0c0;background:#fff"></div>
<div class="a" style="left:45.0px;top:268.4px;width:4px;height:1px;background:#555"></div>
<svg class="a" style="left:55px;top:263.9px" width="11" height="10" viewBox="0 0 11 10"><path d="M5.5 0.5 L10.5 4.5 L9 4.5 L9 9.5 L2 9.5 L2 4.5 L0.5 4.5 Z" fill="#e4e8f4" stroke="#7888a8" stroke-width="1"/></svg>
<div class="t" style="left:71.5px;top:263.7px;color:#000;-webkit-text-stroke-width:0.25px">Zona 4</div>
<div class="a" style="left:61px;top:281.0px;width:9px;height:1px;border-top:1px solid #c4c4c4"></div>
<div class="a" style="left:58.0px;top:278.3px;width:7px;height:7px;border:1px solid #c0c0c0;background:#fff"></div>
<div class="a" style="left:60.0px;top:281.3px;width:4px;height:1px;background:#555"></div>
<div class="a" style="left:61.0px;top:279.3px;width:1px;height:4px;background:#555"></div>
<svg class="a" style="left:69px;top:276.8px" width="13" height="10" viewBox="0 0 13 10"><path d="M1.5 5 C1.5 2.5 4 1 7 1 C10 1 12 2 12 4 L11.5 6.5 L7 9.3 L1.5 8.3 Z" fill="#d4dcec" stroke="#4a5a7a" stroke-width="0.9"/><path d="M1.5 5 L7 6 L12 4 M7 6 L7 9.3" fill="none" stroke="#4a5a7a" stroke-width="0.8"/><path d="M3 3.3 C4.5 2 8 1.8 10.5 2.8" fill="none" stroke="#7a8aaa" stroke-width="0.9"/><path d="M3 6.5 L3 8 M4.8 6.8 L4.8 8.4" stroke="#6a7a9a" stroke-width="0.7"/></svg>
<div class="t" style="left:86.5px;top:276.6px;color:#000;-webkit-text-stroke-width:0.25px">Unità immobiliare 7</div>
<div class="a" style="left:61px;top:294.0px;width:9px;height:1px;border-top:1px solid #c4c4c4"></div>
<div class="a" style="left:58.0px;top:291.2px;width:7px;height:7px;border:1px solid #c0c0c0;background:#fff"></div>
<div class="a" style="left:60.0px;top:294.2px;width:4px;height:1px;background:#555"></div>
<div class="a" style="left:61.0px;top:292.2px;width:1px;height:4px;background:#555"></div>
<svg class="a" style="left:69px;top:289.7px" width="13" height="10" viewBox="0 0 13 10"><path d="M1.5 5 C1.5 2.5 4 1 7 1 C10 1 12 2 12 4 L11.5 6.5 L7 9.3 L1.5 8.3 Z" fill="#d4dcec" stroke="#4a5a7a" stroke-width="0.9"/><path d="M1.5 5 L7 6 L12 4 M7 6 L7 9.3" fill="none" stroke="#4a5a7a" stroke-width="0.8"/><path d="M3 3.3 C4.5 2 8 1.8 10.5 2.8" fill="none" stroke="#7a8aaa" stroke-width="0.9"/><path d="M3 6.5 L3 8 M4.8 6.8 L4.8 8.4" stroke="#6a7a9a" stroke-width="0.7"/></svg>
<div class="t" style="left:86.5px;top:289.5px;color:#000;-webkit-text-stroke-width:0.25px">Unità immobiliare 8</div>
<div class="a" style="left:31px;top:307.0px;width:9px;height:1px;border-top:1px solid #c4c4c4"></div>
<div class="a" style="left:28.0px;top:304.1px;width:7px;height:7px;border:1px solid #c0c0c0;background:#fff"></div>
<div class="a" style="left:30.0px;top:307.1px;width:4px;height:1px;background:#555"></div>
<svg class="a" style="left:40px;top:302.6px" width="12" height="10" viewBox="0 0 12 10"><path d="M6 0.5 L11.5 4.5 L10 4.5 L10 9.5 L2 9.5 L2 4.5 L0.5 4.5 Z" fill="#6a88a8" stroke="#3a5a7a" stroke-width="1"/><rect x="3.5" y="4.5" width="2" height="2" fill="#e8eef5"/></svg>
<div class="t" style="left:56.5px;top:302.4px;color:#000;-webkit-text-stroke-width:0.25px">Edificio intero</div>
<div class="a" style="left:46px;top:320.0px;width:9px;height:1px;border-top:1px solid #c4c4c4"></div>
<div class="a" style="left:43.0px;top:317.0px;width:7px;height:7px;border:1px solid #c0c0c0;background:#fff"></div>
<div class="a" style="left:45.0px;top:320.0px;width:4px;height:1px;background:#555"></div>
<svg class="a" style="left:55px;top:315.5px" width="11" height="10" viewBox="0 0 11 10"><path d="M5.5 0.5 L10.5 4.5 L9 4.5 L9 9.5 L2 9.5 L2 4.5 L0.5 4.5 Z" fill="#e4e8f4" stroke="#7888a8" stroke-width="1"/></svg>
<div class="t" style="left:71.5px;top:315.3px;color:#000;-webkit-text-stroke-width:0.25px">Zona 1</div>
<div class="a" style="left:61px;top:333.0px;width:9px;height:1px;border-top:1px solid #c4c4c4"></div>
<div class="a" style="left:58.0px;top:329.9px;width:7px;height:7px;border:1px solid #c0c0c0;background:#fff"></div>
<div class="a" style="left:60.0px;top:332.9px;width:4px;height:1px;background:#555"></div>
<div class="a" style="left:61.0px;top:330.9px;width:1px;height:4px;background:#555"></div>
<svg class="a" style="left:69px;top:328.4px" width="13" height="10" viewBox="0 0 13 10"><path d="M1.5 5 C1.5 2.5 4 1 7 1 C10 1 12 2 12 4 L11.5 6.5 L7 9.3 L1.5 8.3 Z" fill="#d4dcec" stroke="#4a5a7a" stroke-width="0.9"/><path d="M1.5 5 L7 6 L12 4 M7 6 L7 9.3" fill="none" stroke="#4a5a7a" stroke-width="0.8"/><path d="M3 3.3 C4.5 2 8 1.8 10.5 2.8" fill="none" stroke="#7a8aaa" stroke-width="0.9"/><path d="M3 6.5 L3 8 M4.8 6.8 L4.8 8.4" stroke="#6a7a9a" stroke-width="0.7"/></svg>
<div class="t" style="left:86.5px;top:328.2px;color:#000;-webkit-text-stroke-width:0.25px">Unità immobiliare 1</div>
<div class="a" style="left:61px;top:346.0px;width:9px;height:1px;border-top:1px solid #c4c4c4"></div>
<div class="a" style="left:58.0px;top:342.8px;width:7px;height:7px;border:1px solid #c0c0c0;background:#fff"></div>
<div class="a" style="left:60.0px;top:345.8px;width:4px;height:1px;background:#555"></div>
<div class="a" style="left:61.0px;top:343.8px;width:1px;height:4px;background:#555"></div>
<svg class="a" style="left:69px;top:341.3px" width="13" height="10" viewBox="0 0 13 10"><path d="M1.5 5 C1.5 2.5 4 1 7 1 C10 1 12 2 12 4 L11.5 6.5 L7 9.3 L1.5 8.3 Z" fill="#d4dcec" stroke="#4a5a7a" stroke-width="0.9"/><path d="M1.5 5 L7 6 L12 4 M7 6 L7 9.3" fill="none" stroke="#4a5a7a" stroke-width="0.8"/><path d="M3 3.3 C4.5 2 8 1.8 10.5 2.8" fill="none" stroke="#7a8aaa" stroke-width="0.9"/><path d="M3 6.5 L3 8 M4.8 6.8 L4.8 8.4" stroke="#6a7a9a" stroke-width="0.7"/></svg>
<div class="t" style="left:86.5px;top:341.1px;color:#000;-webkit-text-stroke-width:0.25px">Unità immobiliare 2</div>
<div class="a" style="left:61px;top:359.0px;width:9px;height:1px;border-top:1px solid #c4c4c4"></div>
<div class="a" style="left:58.0px;top:355.7px;width:7px;height:7px;border:1px solid #c0c0c0;background:#fff"></div>
<div class="a" style="left:60.0px;top:358.7px;width:4px;height:1px;background:#555"></div>
<div class="a" style="left:61.0px;top:356.7px;width:1px;height:4px;background:#555"></div>
<svg class="a" style="left:69px;top:354.2px" width="13" height="10" viewBox="0 0 13 10"><path d="M1.5 5 C1.5 2.5 4 1 7 1 C10 1 12 2 12 4 L11.5 6.5 L7 9.3 L1.5 8.3 Z" fill="#d4dcec" stroke="#4a5a7a" stroke-width="0.9"/><path d="M1.5 5 L7 6 L12 4 M7 6 L7 9.3" fill="none" stroke="#4a5a7a" stroke-width="0.8"/><path d="M3 3.3 C4.5 2 8 1.8 10.5 2.8" fill="none" stroke="#7a8aaa" stroke-width="0.9"/><path d="M3 6.5 L3 8 M4.8 6.8 L4.8 8.4" stroke="#6a7a9a" stroke-width="0.7"/></svg>
<div class="t" style="left:86.5px;top:354.0px;color:#000;-webkit-text-stroke-width:0.25px">Unità immobiliare 3</div>
<div class="a" style="left:61px;top:372.0px;width:9px;height:1px;border-top:1px solid #c4c4c4"></div>
<div class="a" style="left:58.0px;top:368.6px;width:7px;height:7px;border:1px solid #c0c0c0;background:#fff"></div>
<div class="a" style="left:60.0px;top:371.6px;width:4px;height:1px;background:#555"></div>
<div class="a" style="left:61.0px;top:369.6px;width:1px;height:4px;background:#555"></div>
<svg class="a" style="left:69px;top:367.1px" width="13" height="10" viewBox="0 0 13 10"><path d="M1.5 5 C1.5 2.5 4 1 7 1 C10 1 12 2 12 4 L11.5 6.5 L7 9.3 L1.5 8.3 Z" fill="#d4dcec" stroke="#4a5a7a" stroke-width="0.9"/><path d="M1.5 5 L7 6 L12 4 M7 6 L7 9.3" fill="none" stroke="#4a5a7a" stroke-width="0.8"/><path d="M3 3.3 C4.5 2 8 1.8 10.5 2.8" fill="none" stroke="#7a8aaa" stroke-width="0.9"/><path d="M3 6.5 L3 8 M4.8 6.8 L4.8 8.4" stroke="#6a7a9a" stroke-width="0.7"/></svg>
<div class="t" style="left:86.5px;top:366.9px;color:#000;-webkit-text-stroke-width:0.25px">Unità immobiliare 4</div>
<div class="a" style="left:61px;top:385.0px;width:9px;height:1px;border-top:1px solid #c4c4c4"></div>
<div class="a" style="left:58.0px;top:381.5px;width:7px;height:7px;border:1px solid #c0c0c0;background:#fff"></div>
<div class="a" style="left:60.0px;top:384.5px;width:4px;height:1px;background:#555"></div>
<div class="a" style="left:61.0px;top:382.5px;width:1px;height:4px;background:#555"></div>
<svg class="a" style="left:69px;top:380.0px" width="13" height="10" viewBox="0 0 13 10"><path d="M1.5 5 C1.5 2.5 4 1 7 1 C10 1 12 2 12 4 L11.5 6.5 L7 9.3 L1.5 8.3 Z" fill="#d4dcec" stroke="#4a5a7a" stroke-width="0.9"/><path d="M1.5 5 L7 6 L12 4 M7 6 L7 9.3" fill="none" stroke="#4a5a7a" stroke-width="0.8"/><path d="M3 3.3 C4.5 2 8 1.8 10.5 2.8" fill="none" stroke="#7a8aaa" stroke-width="0.9"/><path d="M3 6.5 L3 8 M4.8 6.8 L4.8 8.4" stroke="#6a7a9a" stroke-width="0.7"/></svg>
<div class="t" style="left:86.5px;top:379.8px;color:#000;-webkit-text-stroke-width:0.25px">Unità immobiliare 5</div>
<div class="a" style="left:61px;top:397.0px;width:9px;height:1px;border-top:1px solid #c4c4c4"></div>
<div class="a" style="left:58.0px;top:394.4px;width:7px;height:7px;border:1px solid #c0c0c0;background:#fff"></div>
<div class="a" style="left:60.0px;top:397.4px;width:4px;height:1px;background:#555"></div>
<div class="a" style="left:61.0px;top:395.4px;width:1px;height:4px;background:#555"></div>
<svg class="a" style="left:69px;top:392.9px" width="13" height="10" viewBox="0 0 13 10"><path d="M1.5 5 C1.5 2.5 4 1 7 1 C10 1 12 2 12 4 L11.5 6.5 L7 9.3 L1.5 8.3 Z" fill="#d4dcec" stroke="#4a5a7a" stroke-width="0.9"/><path d="M1.5 5 L7 6 L12 4 M7 6 L7 9.3" fill="none" stroke="#4a5a7a" stroke-width="0.8"/><path d="M3 3.3 C4.5 2 8 1.8 10.5 2.8" fill="none" stroke="#7a8aaa" stroke-width="0.9"/><path d="M3 6.5 L3 8 M4.8 6.8 L4.8 8.4" stroke="#6a7a9a" stroke-width="0.7"/></svg>
<div class="t" style="left:86.5px;top:392.7px;color:#000;-webkit-text-stroke-width:0.25px">Unità immobiliare 6</div>
<div class="a" style="left:61px;top:410.0px;width:9px;height:1px;border-top:1px solid #c4c4c4"></div>
<div class="a" style="left:58.0px;top:407.3px;width:7px;height:7px;border:1px solid #c0c0c0;background:#fff"></div>
<div class="a" style="left:60.0px;top:410.3px;width:4px;height:1px;background:#555"></div>
<div class="a" style="left:61.0px;top:408.3px;width:1px;height:4px;background:#555"></div>
<svg class="a" style="left:69px;top:405.8px" width="13" height="10" viewBox="0 0 13 10"><path d="M1.5 5 C1.5 2.5 4 1 7 1 C10 1 12 2 12 4 L11.5 6.5 L7 9.3 L1.5 8.3 Z" fill="#d4dcec" stroke="#4a5a7a" stroke-width="0.9"/><path d="M1.5 5 L7 6 L12 4 M7 6 L7 9.3" fill="none" stroke="#4a5a7a" stroke-width="0.8"/><path d="M3 3.3 C4.5 2 8 1.8 10.5 2.8" fill="none" stroke="#7a8aaa" stroke-width="0.9"/><path d="M3 6.5 L3 8 M4.8 6.8 L4.8 8.4" stroke="#6a7a9a" stroke-width="0.7"/></svg>
<div class="t" style="left:86.5px;top:405.6px;color:#000;-webkit-text-stroke-width:0.25px">Unità immobiliare 7</div>
<div class="a" style="left:61px;top:423.0px;width:9px;height:1px;border-top:1px solid #c4c4c4"></div>
<div class="a" style="left:58.0px;top:420.2px;width:7px;height:7px;border:1px solid #c0c0c0;background:#fff"></div>
<div class="a" style="left:60.0px;top:423.2px;width:4px;height:1px;background:#555"></div>
<div class="a" style="left:61.0px;top:421.2px;width:1px;height:4px;background:#555"></div>
<svg class="a" style="left:69px;top:418.7px" width="13" height="10" viewBox="0 0 13 10"><path d="M1.5 5 C1.5 2.5 4 1 7 1 C10 1 12 2 12 4 L11.5 6.5 L7 9.3 L1.5 8.3 Z" fill="#d4dcec" stroke="#4a5a7a" stroke-width="0.9"/><path d="M1.5 5 L7 6 L12 4 M7 6 L7 9.3" fill="none" stroke="#4a5a7a" stroke-width="0.8"/><path d="M3 3.3 C4.5 2 8 1.8 10.5 2.8" fill="none" stroke="#7a8aaa" stroke-width="0.9"/><path d="M3 6.5 L3 8 M4.8 6.8 L4.8 8.4" stroke="#6a7a9a" stroke-width="0.7"/></svg>
<div class="t" style="left:86.5px;top:418.5px;color:#000;-webkit-text-stroke-width:0.25px">Unità immobiliare 8</div>
<svg class="a" style="left:17px;top:10px" width="29" height="28" viewBox="0 0 29 28"><path d="M15 3 L27.5 11.5 L23.5 11.5 L23.5 26 L6.5 26 L6.5 11.5 L2.5 11.5 Z" fill="#fff" stroke="#0a1830" stroke-width="1.7" stroke-linejoin="round"/><path d="M14.8 12 A5.5 6.5 0 0 0 14.8 24" fill="#f4a030" opacity="0.85"/><path d="M11 14 L13 16 M10 18 L12.5 18 M11 22 L13 20" stroke="#f8c060" stroke-width="0.9"/><path d="M16 13.5 L20.5 22.5 M20.5 13.5 L16 22.5 M15.8 18 L21 18" stroke="#3430a8" stroke-width="1.7"/></svg>
<svg class="a" style="left:53px;top:11px" width="11" height="10" viewBox="0 0 11 10"><rect x="0.5" y="0.5" width="10" height="9.5" fill="#2e3a2e" rx="0.5"/><rect x="2" y="1" width="7" height="4" fill="#fafafa"/><rect x="3" y="6.5" width="5" height="3" fill="#111"/><rect x="6" y="7" width="1.2" height="2" fill="#ddd"/></svg>
<svg class="a" style="left:72px;top:13px" width="10" height="6" viewBox="0 0 10 6"><path d="M2.5 2.2 C5 0.8 8.5 1.2 8.5 3.5 C8.5 4.8 7.5 5.5 6 5.6" fill="none" stroke="#111" stroke-width="1.3"/><path d="M0.3 1 L4 0.8 L1.5 4.5 Z" fill="#111"/></svg>
<svg class="a" style="left:91px;top:13px" width="10" height="6" viewBox="0 0 10 6"><path d="M7.5 2.2 C5 0.8 1.5 1.2 1.5 3.5 C1.5 4.8 2.5 5.5 4 5.6" fill="none" stroke="#c8c8c8" stroke-width="1.3"/><path d="M9.7 1 L6 0.8 L8.5 4.5 Z" fill="#c8c8c8"/></svg>
<svg class="a" style="left:108px;top:10px" width="13" height="11" viewBox="0 0 13 11"><path d="M3 2 L8 0.5 L11 3 L6 5 Z" fill="#fff" stroke="#222" stroke-width="0.8"/><path d="M0.8 5 L7 3 L12.3 5.5 L12.3 8.5 L6 10.5 L0.8 8 Z" fill="#555" stroke="#111" stroke-width="0.8"/><path d="M0.8 5 L6 7.5 L12.3 5.5" fill="none" stroke="#ddd" stroke-width="0.8"/><path d="M3 6 L6 7" stroke="#2a8a3a" stroke-width="1"/></svg>
<div class="t" style="left:697px;top:10.5px;font-size:11px;font-weight:bold;color:#fde8e0;transform:none">?</div>
<div class="a" style="left:722px;top:17.5px;width:8px;height:2px;background:#fde8e0"></div>
<div class="a" style="left:747px;top:13px;width:10px;height:7px;border:1.5px solid #fde8e0;border-top-width:2px;background:#9a3c38"></div>
<svg class="a" style="left:774px;top:13px" width="8" height="8" viewBox="0 0 8 8"><path d="M0.8 0.8 L7.2 7.2 M7.2 0.8 L0.8 7.2" stroke="#fde8e0" stroke-width="1.6"/></svg>
<svg class="a" style="left:752px;top:29px" width="13" height="11" viewBox="0 0 13 11"><defs><radialGradient id="gg" cx="0.35" cy="0.35" r="0.7"><stop offset="0" stop-color="#8ad8ff"/><stop offset="0.5" stop-color="#2a78d8"/><stop offset="1" stop-color="#0a2a90"/></radialGradient></defs><circle cx="6.5" cy="5.5" r="5.3" fill="url(#gg)"/><path d="M3 4 L6 3 L7 6 L5 8 Z" fill="#bff" opacity="0.7"/></svg>
<div class="a" style="left:766px;top:33px;width:2px;height:2px;background:#777"></div>
<svg class="a" style="left:772px;top:28px" width="13" height="12" viewBox="0 0 13 12"><path d="M1 7 L7 1 L12 4 L6 10.5 Z" fill="#8a2a88" stroke="#3a0a3a" stroke-width="0.9"/><path d="M1 7 L1.5 9 L6 11.5 L6 10.5" fill="#f0d8f0" stroke="#3a0a3a" stroke-width="0.8"/><path d="M5 4 L9 3" stroke="#e8a8e8" stroke-width="0.8"/></svg>
<div class="a" style="left:786px;top:33px;width:2px;height:2px;background:#777"></div>
<svg class="a" style="left:24px;top:60px" width="17" height="21" viewBox="0 0 17 21"><path d="M6 1 L6 3 M1.5 4 L3 5 M10.5 4 L9 5 M1 8 L2.5 8" stroke="#5a6a7a" stroke-width="0.9"/><circle cx="6" cy="7.5" r="3" fill="#e8eef4" stroke="#5a6a7a" stroke-width="1"/><path d="M2 15 C0 15 0 11 2.5 11 C3 8 7 7.5 8.5 9.5 C10 8 13 9 13 11.5 C16 11.5 16.5 15 14 15 Z" fill="#dce6f0" stroke="#4a5a6a" stroke-width="1.2"/><path d="M3.5 17.5 L3.5 18.5 M6 17.5 L6 18.5 M8.5 17.5 L8.5 18.5 M11 17.5 L11 18.5 M13.5 17.5 L13.5 18.5 M4.5 20 L4.5 21 M7 20 L7 21 M9.5 20 L9.5 21 M12 20 L12 21" stroke="#4a5a6a" stroke-width="0.9"/></svg>
<svg class="a" style="left:51px;top:61px" width="18" height="18" viewBox="0 0 18 18"><path d="M15.05 7.65 L17.49 7.63 L17.49 10.37 L15.05 10.35 L14.24 12.32 L15.97 14.03 L14.03 15.97 L12.32 14.24 L10.35 15.05 L10.37 17.49 L7.63 17.49 L7.65 15.05 L5.68 14.24 L3.97 15.97 L2.03 14.03 L3.76 12.32 L2.95 10.35 L0.51 10.37 L0.51 7.63 L2.95 7.65 L3.76 5.68 L2.03 3.97 L3.97 2.03 L5.68 3.76 L7.65 2.95 L7.63 0.51 L10.37 0.51 L10.35 2.95 L12.32 3.76 L14.03 2.03 L15.97 3.97 L14.24 5.68 Z" fill="#f4f6f8" stroke="#4a5866" stroke-width="1.3" stroke-linejoin="round"/><circle cx="9" cy="9" r="3.6" fill="none" stroke="#9aa4ae" stroke-width="0.8"/><circle cx="9" cy="9" r="2" fill="none" stroke="#3a4856" stroke-width="1.4"/></svg>
<svg class="a" style="left:81px;top:49px" width="22" height="18" viewBox="0 0 22 18"><path d="M1 8 L11 0.8 L21 8 L18.5 8 L18.5 17 L3.5 17 L3.5 8 Z" fill="#fafafa" stroke="#a8a8a8" stroke-width="1.3"/><path d="M3.5 9.5 L9.5 9.5 L9.5 3.5 M9.5 9.5 L9.5 13 L18.5 13" fill="none" stroke="#a8a8a8" stroke-width="1.1"/></svg>
<svg class="a" style="left:109px;top:49px" width="22" height="18" viewBox="0 0 22 18"><path d="M1 8 L11 0.8 L21 8 L18.5 8 L18.5 17 L3.5 17 L3.5 8 Z" fill="#fafafa" stroke="#a8a8a8" stroke-width="1.3"/></svg>
<svg class="a" style="left:150px;top:46px" width="21" height="22" viewBox="0 0 21 22"><path d="M3 17 L11 4 C12 2 15 0.5 16.5 2 C18 3.5 17.5 6 16 8 L8 20 Z" fill="#3448b8" stroke="#101850" stroke-width="1"/><path d="M11 4 C13 5 14 7 12.5 9" fill="none" stroke="#7a90f0" stroke-width="1.2"/><path d="M3 17 C1.5 15 2 12.5 4.5 11 L10 14 L8 20 C6 20.5 4 19 3 17 Z" fill="#fff" stroke="#111" stroke-width="1"/><path d="M4 16 L9 12.5 M5 18 L9.5 15" stroke="#333" stroke-width="0.7"/><rect x="5" y="18.5" width="15" height="2.6" fill="#000"/></svg>
<svg class="a" style="left:187px;top:48px" width="20" height="20" viewBox="0 0 20 20"><path d="M1 0.8 L9 0.8 L10 2 L10 15 L1 15 Z" fill="#fbfbfb" stroke="#a8a8a8" stroke-width="1.1"/><path d="M5.5 3.5 L15 3.5 L18.5 7 L18.5 18.8 L5.5 18.8 Z" fill="#fbfbfb" stroke="#a8a8a8" stroke-width="1.1"/><path d="M15 3.5 L15 7 L18.5 7" fill="none" stroke="#b8b8b8" stroke-width="0.9"/></svg>
<svg class="a" style="left:221px;top:49px" width="20" height="17" viewBox="0 0 20 17"><rect x="2.5" y="1" width="5" height="3" fill="#3d5e7a"/><rect x="12.5" y="1" width="5" height="3" fill="#3d5e7a"/><path d="M1 5 L8.5 4 L9 7 L11 7 L11.5 4 L19 5 L19.5 16 L12 16.5 L11 11 L9 11 L8 16.5 L0.5 16 Z" fill="#4e7494"/><path d="M3 6 L3 14 M16 6 L16 14" stroke="#7a9ab4" stroke-width="1"/><rect x="9" y="7.5" width="2" height="3" fill="#c8d8e4"/></svg>
<svg class="a" style="left:257px;top:49px" width="11" height="11" viewBox="0 0 11 11"><path d="M5.5 0.5 L10.5 5.5 L7.5 5.5 L7.5 10.5 L3.5 10.5 L3.5 5.5 L0.5 5.5 Z" fill="#0c2ac0" stroke="#061a80" stroke-width="0.6"/></svg>
<svg class="a" style="left:257px;top:76px" width="11" height="11" viewBox="0 0 11 11"><path d="M5.5 10.5 L10.5 5.5 L7.5 5.5 L7.5 0.5 L3.5 0.5 L3.5 5.5 L0.5 5.5 Z" fill="#0c2ac0" stroke="#061a80" stroke-width="0.6"/></svg>
<svg class="a" style="left:329px;top:47px" width="11" height="12" viewBox="0 0 11 12"><path d="M3 0.5 L7 8 M9 0.5 L4 8" stroke="#b0b0b0" stroke-width="1.1"/><circle cx="3.5" cy="9.5" r="1.8" fill="none" stroke="#a8a8a8" stroke-width="1"/><circle cx="7.5" cy="9.5" r="1.8" fill="none" stroke="#a8a8a8" stroke-width="1"/></svg>
<svg class="a" style="left:329px;top:64px" width="12" height="12" viewBox="0 0 12 12"><rect x="0.5" y="0.5" width="7" height="8" fill="#b8b8b8"/><rect x="4" y="3.5" width="7.5" height="8" fill="#a8a8a8" stroke="#fafafa" stroke-width="0.8"/></svg>
<svg class="a" style="left:329px;top:82px" width="12" height="12" viewBox="0 0 12 12"><rect x="0.5" y="0.5" width="7" height="9" fill="#b8b8b8"/><rect x="4" y="4" width="7.5" height="7.5" fill="#a8a8a8" stroke="#fafafa" stroke-width="0.8"/></svg>
<svg class="a" style="left:390px;top:47px" width="20" height="21" viewBox="0 0 20 21"><rect x="1" y="1" width="18" height="19" rx="2" fill="#c4d8ec" stroke="#6a7484" stroke-width="1.2"/><rect x="3" y="3" width="14" height="4" fill="#2a5a94"/><rect x="3.2" y="8.4" width="2.4" height="1.9" fill="#1a3050"/><rect x="6.6" y="8.4" width="2.4" height="1.9" fill="#1a3050"/><rect x="10.0" y="8.4" width="2.4" height="1.9" fill="#1a3050"/><rect x="13.4" y="8.4" width="2.4" height="1.9" fill="#1a3050"/><rect x="3.2" y="11.6" width="2.4" height="1.9" fill="#1a3050"/><rect x="6.6" y="11.6" width="2.4" height="1.9" fill="#1a3050"/><rect x="10.0" y="11.6" width="2.4" height="1.9" fill="#1a3050"/><rect x="13.4" y="11.6" width="2.4" height="1.9" fill="#1a3050"/><rect x="3.2" y="14.8" width="2.4" height="1.9" fill="#1a3050"/><rect x="6.6" y="14.8" width="2.4" height="1.9" fill="#1a3050"/><rect x="10.0" y="14.8" width="2.4" height="1.9" fill="#1a3050"/><rect x="13.4" y="14.8" width="2.4" height="1.9" fill="#1a3050"/></svg>
<svg class="a" style="left:755px;top:47px" width="22" height="22" viewBox="0 0 22 22"><defs><linearGradient id="bimg" x1="0" y1="0" x2="1" y2="1"><stop offset="0" stop-color="#f4e4f8"/><stop offset="0.6" stop-color="#e8c8f0"/><stop offset="1" stop-color="#a8f0f0"/></linearGradient></defs><circle cx="10" cy="11.5" r="8" fill="url(#bimg)"/><path d="M16 5 A8.5 8.5 0 1 0 18.5 11" fill="none" stroke="#0a0a0a" stroke-width="1.8"/><path d="M13.5 2.5 L20 2 L18 8.5 Z" fill="#0a0a0a"/><path d="M7 15 C4 12 6 6 9.5 6.5 C12 7 11.5 11 8.5 11.5 L13 10.5 M7 15 C8.5 17 11 16.5 12 15" fill="none" stroke="#6a28b0" stroke-width="1.6"/><path d="M11.5 17.5 L17 12.5 L17.5 16 Z" fill="#60d8e8"/><path d="M13 6.5 L15.5 9" stroke="#c03060" stroke-width="1.1"/></svg>
<div class="t" style="left:80px;top:72px;color:#b4b4b4">Ipotesi</div>
<div class="t" style="left:110px;top:72px;color:#b4b4b4">Zona</div>
<div class="t" style="left:140px;top:72px;">Cancellare</div>
<div class="t" style="left:181px;top:72px;color:#b4b4b4">Duplicare</div>
<div class="t" style="left:219px;top:72px;">Cercare</div>
<div class="t" style="left:271px;top:49px;">Spostare</div>
<div class="t" style="left:271px;top:58px;">verso l'alto</div>
<div class="t" style="left:271px;top:75.5px;">Spostare</div>
<div class="t" style="left:271px;top:84.5px;">verso il basso</div>
<div class="t" style="left:344px;top:48px;color:#b4b4b4">Tagliare</div>
<div class="t" style="left:344px;top:66px;color:#b4b4b4">Copiare</div>
<div class="t" style="left:344px;top:84px;color:#b4b4b4">Incollare</div>
<div class="t" style="left:381px;top:72.5px;">Aggiornare</div>
<div class="t" style="left:387px;top:82px;">risultati</div>
<div class="t" style="left:747px;top:72px;">Aggiornare</div>
<svg class="a" style="left:243px;top:180px" width="12" height="14" viewBox="0 0 12 14"><rect x="1" y="2.5" width="7.5" height="10" fill="#e8e8e8" stroke="#8a8a8a" stroke-width="0.9"/><rect x="3.5" y="0.8" width="7.5" height="10" fill="#f4f4f4" stroke="#8a8a8a" stroke-width="0.9"/><path d="M5 4 L9.5 4 M5 6 L9.5 6 M5 8 L9.5 8" stroke="#9a9a9a" stroke-width="0.6"/></svg>
<svg class="a" style="left:322px;top:157px" width="13" height="13" viewBox="0 0 13 13"><path d="M1.5 2.5 L6 2.5 L7 4 L11.5 4 L11.5 11.5 L1.5 11.5 Z" fill="#fff" stroke="#222" stroke-width="0.9"/><path d="M3 6 L12.5 6 L11.5 11.5 L1.5 11.5 Z" fill="#f0d830" stroke="#222" stroke-width="0.9"/><path d="M6 8.5 L9.5 8.5" stroke="#111" stroke-width="0.9"/></svg>
<svg class="a" style="left:607px;top:203px" width="7" height="4" viewBox="0 0 7 4"><path d="M0 0 L7 0 L3.5 4 Z" fill="#111"/></svg>
<svg class="a" style="left:694px;top:203px" width="7" height="4" viewBox="0 0 7 4"><path d="M0 0 L7 0 L3.5 4 Z" fill="#111"/></svg>
<svg class="a" style="left:244px;top:216px" width="13" height="13" viewBox="0 0 13 13"><circle cx="5.5" cy="5.5" r="4.3" fill="#fff" stroke="#111" stroke-width="1.5"/><path d="M8.5 8.5 L12.3 12.3" stroke="#111" stroke-width="2"/><path d="M1 8 L1 12 L4.5 12" fill="none" stroke="#2030c0" stroke-width="1.6"/><path d="M2 2 A4 4 0 0 1 9.5 3" fill="none" stroke="#2030c0" stroke-width="1.4"/></svg>
<svg class="a" style="left:260px;top:216px" width="13" height="13" viewBox="0 0 13 13"><circle cx="5.5" cy="5.5" r="4.3" fill="#fff" stroke="#111" stroke-width="1.5"/><path d="M8.5 8.5 L12.3 12.3" stroke="#111" stroke-width="2"/><path d="M5.5 1.5 L5.5 9.5 M1.5 5.5 L9.5 5.5" stroke="#2030c0" stroke-width="1.3"/><path d="M4 3 L5.5 1.3 L7 3 M4 8 L5.5 9.7 L7 8 M3 4 L1.3 5.5 L3 7 M8 4 L9.7 5.5 L8 7" fill="none" stroke="#2030c0" stroke-width="1"/></svg>
<svg class="a" style="left:277px;top:216px" width="13" height="13" viewBox="0 0 13 13"><circle cx="5.5" cy="5.5" r="4.3" fill="#fff" stroke="#111" stroke-width="1.5"/><path d="M8.5 8.5 L12.3 12.3" stroke="#111" stroke-width="2"/><text x="5.5" y="7.3" font-size="4.8" text-anchor="middle" fill="#111" font-family="Liberation Sans">x2</text></svg>
<svg class="a" style="left:294px;top:216px" width="13" height="13" viewBox="0 0 13 13"><path d="M2 9 A5 5 0 1 1 10.5 4" fill="none" stroke="#2a40c8" stroke-width="2.2"/><path d="M8 0.5 L12.5 1 L11.5 5.5 Z" fill="#2a40c8"/><path d="M7 9 L12 12 L10 8 Z" fill="#8a8a50"/></svg>
<svg class="a" style="left:311px;top:216px" width="12" height="12" viewBox="0 0 12 12"><circle cx="5" cy="5" r="3.6" fill="#fff" stroke="#111" stroke-width="1.3"/><path d="M7.5 7.5 L11 11" stroke="#111" stroke-width="1.8"/><path d="M3.5 5 L6.5 5" stroke="#444" stroke-width="0.8"/></svg>
<svg class="a" style="left:327px;top:216px" width="11" height="13" viewBox="0 0 11 13"><path d="M2.5 6 L2.5 2 C2.5 1 4 1 4 2 L4 5 L4 1.2 C4 0.2 5.6 0.2 5.6 1.2 L5.6 5 L5.6 1.8 C5.6 0.8 7.2 0.8 7.2 1.8 L7.2 5.5 L7.2 3 C7.2 2 8.8 2 8.8 3 L8.8 8 C8.8 11 7 12.5 5 12.5 C3 12.5 1.5 11 0.8 9 L0.5 7 C0.3 6 1.8 5.5 2.5 7 Z" fill="#fff" stroke="#111" stroke-width="0.9"/></svg>
<svg class="a" style="left:343px;top:216px" width="13" height="13" viewBox="0 0 13 13"><rect x="0.5" y="0.5" width="11" height="3" fill="#50b8c0"/><rect x="0.5" y="3.5" width="11" height="8.5" fill="#fff" stroke="#3a7a9a" stroke-width="0.9"/><path d="M3 5 L8 9.5 M8 6.5 L8 9.5 L5 9.5" fill="none" stroke="#1a2a80" stroke-width="1.5"/><rect x="7" y="9" width="5" height="3.5" fill="#2a3a90"/></svg><div class="a" style="left:24px;top:474px;width:13px;height:140px;background:#fbfbfb;border-left:1px solid #e4e4e4;border-right:1px solid #e4e4e4"></div>
<div class="a" style="left:24px;top:522px;width:13px;height:12px;background:linear-gradient(90deg,#f4f4f4,#dcdcdc);border:1px solid #b8b8b8;border-radius:1px"></div>
<svg class="a" style="left:28px;top:478px" width="5" height="4" viewBox="0 0 5 4"><path d="M0.5 3.5 L2.5 0.5 L4.5 3.5 Z" fill="#666"/></svg>
<svg class="a" style="left:28px;top:607px" width="5" height="4" viewBox="0 0 5 4"><path d="M0.5 0.5 L2.5 3.5 L4.5 0.5 Z" fill="#666"/></svg>
<div class="a" style="left:38px;top:446px;width:198px;height:11px;background:#f4f4f4;border-bottom:1px solid #e0e0e0"></div>
<div class="a" style="left:153px;top:446px;width:12px;height:11px;background:linear-gradient(#f8f8f8,#dcdcdc);border:1px solid #b4b4b4;border-radius:1px"></div>
<svg class="a" style="left:41px;top:448px" width="5" height="7" viewBox="0 0 5 7"><path d="M4.5 0.5 L0.5 3.5 L4.5 6.5 Z" fill="#555"/></svg>
<svg class="a" style="left:226px;top:448px" width="5" height="7" viewBox="0 0 5 7"><path d="M0.5 0.5 L4.5 3.5 L0.5 6.5 Z" fill="#555"/></svg>
<svg class="a" style="left:25px;top:448px" width="9" height="8" viewBox="0 0 9 8"><path d="M4 1.6 A3.1 3.1 0 1 0 7.6 4.5" fill="none" stroke="#1a2448" stroke-width="1.9"/><path d="M3.5 0 L8 1.5 L4 3.8 Z" fill="#1a2448"/></svg>
<svg class="a" style="left:24px;top:460px" width="13" height="11" viewBox="0 0 13 11"><path d="M0.5 5.5 L2.5 3 L2 1 L4.5 1.8 L6.5 0.3 L8.5 1.8 L11 1 L10.5 3 L12.5 5.5 L10.5 8 L11 10 L8.5 9.2 L6.5 10.7 L4.5 9.2 L2 10 L2.5 8 Z" fill="#1a1a2a"/><ellipse cx="6.5" cy="5.5" rx="3.6" ry="3" fill="#2a3ab8"/><circle cx="5.8" cy="4.8" r="1" fill="#8898f0"/></svg>
<svg class="a" style="left:48px;top:597px" width="12" height="10" viewBox="0 0 12 10"><path d="M2 9 L2 1" stroke="#30a030" stroke-width="1.4"/><path d="M2 9 L10 9" stroke="#c03030" stroke-width="1.2"/><path d="M2 9 L8 4" stroke="#3040c0" stroke-width="1.2"/><rect x="4.5" y="4" width="4" height="4" fill="none" stroke="#222" stroke-width="0.8"/></svg>
<svg class="a" style="left:38px;top:457px" width="196" height="157" viewBox="38 457 196 157"><defs><clipPath id="bc"><path d="M79 486 L106 473 L146 469 L199 484 L191 522 L194 555 L165 593 L139 605 L118 593 L87 555 L82 517 Z"/></clipPath><filter id="bl"><feGaussianBlur stdDeviation="1.5"/></filter><filter id="bl2"><feGaussianBlur stdDeviation="0.35"/></filter><radialGradient id="bg3" cx="0.5" cy="0.3" r="0.7"><stop offset="0" stop-color="#a0a0a0"/><stop offset="0.6" stop-color="#b0b0b0"/><stop offset="1" stop-color="#b8b8b8"/></radialGradient></defs><g filter="url(#bl)"><path d="M79 486 L106 473 L146 469 L199 484 L191 522 L194 555 L165 593 L139 605 L118 593 L87 555 L82 517 Z" fill="url(#bg3)" opacity="0.8"/><path d="M105 478 L178 476 L182 520 L108 520 Z" fill="#909090" opacity="0.2"/></g><g filter="url(#bl2)" clip-path="url(#bc)"><path d="M81.0 489.0 L138.0 465.0" stroke="#707070" stroke-width="0.55" opacity="0.45"/><path d="M138.0 465.0 L196.2 486.4" stroke="#707070" stroke-width="0.55" opacity="0.35"/><path d="M196.2 486.4 L139.2 510.4" stroke="#707070" stroke-width="0.55" opacity="0.45"/><path d="M139.2 510.4 L81.0 489.0" stroke="#707070" stroke-width="0.55" opacity="0.45"/><path d="M81.0 507.0 L138.0 483.0" stroke="#707070" stroke-width="0.55" opacity="0.45"/><path d="M138.0 483.0 L196.2 504.4" stroke="#707070" stroke-width="0.55" opacity="0.35"/><path d="M196.2 504.4 L139.2 528.4" stroke="#707070" stroke-width="0.55" opacity="0.45"/><path d="M139.2 528.4 L81.0 507.0" stroke="#707070" stroke-width="0.55" opacity="0.45"/><path d="M81.0 525.0 L138.0 501.0" stroke="#707070" stroke-width="0.55" opacity="0.45"/><path d="M138.0 501.0 L196.2 522.4" stroke="#707070" stroke-width="0.55" opacity="0.35"/><path d="M196.2 522.4 L139.2 546.4" stroke="#707070" stroke-width="0.55" opacity="0.45"/><path d="M139.2 546.4 L81.0 525.0" stroke="#707070" stroke-width="0.55" opacity="0.45"/><path d="M81.0 543.0 L138.0 519.0" stroke="#707070" stroke-width="0.55" opacity="0.45"/><path d="M138.0 519.0 L196.2 540.4" stroke="#707070" stroke-width="0.55" opacity="0.35"/><path d="M196.2 540.4 L139.2 564.4" stroke="#707070" stroke-width="0.55" opacity="0.45"/><path d="M139.2 564.4 L81.0 543.0" stroke="#707070" stroke-width="0.55" opacity="0.45"/><path d="M81.0 561.0 L138.0 537.0" stroke="#707070" stroke-width="0.55" opacity="0.45"/><path d="M138.0 537.0 L196.2 558.4" stroke="#707070" stroke-width="0.55" opacity="0.35"/><path d="M196.2 558.4 L139.2 582.4" stroke="#707070" stroke-width="0.55" opacity="0.45"/><path d="M139.2 582.4 L81.0 561.0" stroke="#707070" stroke-width="0.55" opacity="0.45"/><path d="M81.0 579.0 L138.0 555.0" stroke="#707070" stroke-width="0.55" opacity="0.45"/><path d="M138.0 555.0 L196.2 576.4" stroke="#707070" stroke-width="0.55" opacity="0.35"/><path d="M196.2 576.4 L139.2 600.4" stroke="#707070" stroke-width="0.55" opacity="0.45"/><path d="M139.2 600.4 L81.0 579.0" stroke="#707070" stroke-width="0.55" opacity="0.45"/><path d="M81.0 489.0 L81.0 579.0" stroke="#707070" stroke-width="0.55" opacity="0.3"/><path d="M138.0 465.0 L138.0 555.0" stroke="#707070" stroke-width="0.55" opacity="0.3"/><path d="M196.2 486.4 L196.2 576.4" stroke="#707070" stroke-width="0.55" opacity="0.3"/><path d="M139.2 510.4 L139.2 600.4" stroke="#707070" stroke-width="0.55" opacity="0.3"/><path d="M109.5 477.0 L109.5 567.0" stroke="#707070" stroke-width="0.55" opacity="0.3"/><path d="M110.1 499.7 L110.1 589.7" stroke="#707070" stroke-width="0.55" opacity="0.3"/><path d="M167.7 498.4 L167.7 588.4" stroke="#707070" stroke-width="0.55" opacity="0.3"/><path d="M167.1 475.7 L167.1 565.7" stroke="#707070" stroke-width="0.55" opacity="0.3"/><path d="M106.3 533.6 L112.8 536.0" stroke="#707070" stroke-width="0.55" opacity="0.35"/><path d="M110.2 571.8 L125.0 565.6" stroke="#707070" stroke-width="0.55" opacity="0.35"/><path d="M110.2 571.8 L110.2 585.7" stroke="#707070" stroke-width="0.55" opacity="0.3"/><path d="M117.9 505.7 L123.5 507.7" stroke="#707070" stroke-width="0.55" opacity="0.35"/><path d="M117.9 505.7 L117.9 519.5" stroke="#707070" stroke-width="0.55" opacity="0.3"/><path d="M96.1 511.3 L115.7 503.0" stroke="#707070" stroke-width="0.55" opacity="0.35"/><path d="M96.1 511.3 L96.1 525.4" stroke="#707070" stroke-width="0.55" opacity="0.3"/><path d="M115.9 501.9 L124.3 498.4" stroke="#707070" stroke-width="0.55" opacity="0.35"/><path d="M161.3 565.6 L170.5 561.7" stroke="#707070" stroke-width="0.55" opacity="0.35"/><path d="M161.3 565.6 L161.3 582.5" stroke="#707070" stroke-width="0.55" opacity="0.3"/><path d="M161.9 505.5 L169.1 508.2" stroke="#707070" stroke-width="0.55" opacity="0.35"/><path d="M110.3 501.6 L122.9 506.2" stroke="#707070" stroke-width="0.55" opacity="0.35"/><path d="M164.6 507.8 L182.0 500.4" stroke="#707070" stroke-width="0.55" opacity="0.35"/><path d="M90.4 575.7 L107.8 568.4" stroke="#707070" stroke-width="0.55" opacity="0.35"/><path d="M90.4 575.7 L90.4 591.9" stroke="#707070" stroke-width="0.55" opacity="0.3"/><path d="M185.5 530.4 L185.9 530.2" stroke="#707070" stroke-width="0.55" opacity="0.35"/><path d="M136.8 510.5 L145.4 506.9" stroke="#707070" stroke-width="0.55" opacity="0.35"/><path d="M136.8 510.5 L136.8 526.8" stroke="#707070" stroke-width="0.55" opacity="0.3"/><path d="M135.4 530.8 L142.7 527.7" stroke="#707070" stroke-width="0.55" opacity="0.35"/><path d="M121.0 560.8 L141.9 552.0" stroke="#707070" stroke-width="0.55" opacity="0.35"/><path d="M127.9 519.0 L147.8 510.6" stroke="#707070" stroke-width="0.55" opacity="0.35"/><path d="M127.9 519.0 L127.9 528.9" stroke="#707070" stroke-width="0.55" opacity="0.3"/><path d="M135.0 517.8 L152.7 524.3" stroke="#707070" stroke-width="0.55" opacity="0.35"/><path d="M149.8 564.8 L172.3 573.1" stroke="#707070" stroke-width="0.55" opacity="0.35"/><path d="M109.8 560.7 L115.6 562.9" stroke="#707070" stroke-width="0.55" opacity="0.35"/><path d="M109.8 560.7 L109.8 569.6" stroke="#707070" stroke-width="0.55" opacity="0.3"/><path d="M121.2 496.7 L136.0 502.2" stroke="#707070" stroke-width="0.55" opacity="0.35"/><path d="M166.6 553.6 L173.8 550.6" stroke="#707070" stroke-width="0.55" opacity="0.35"/><path d="M166.6 553.6 L166.6 564.7" stroke="#707070" stroke-width="0.55" opacity="0.3"/><path d="M165.7 500.3 L176.1 496.0" stroke="#707070" stroke-width="0.55" opacity="0.35"/><path d="M165.7 500.3 L165.7 516.8" stroke="#707070" stroke-width="0.55" opacity="0.3"/><path d="M150.5 528.1 L168.1 520.7" stroke="#707070" stroke-width="0.55" opacity="0.35"/><path d="M150.5 528.1 L150.5 543.7" stroke="#707070" stroke-width="0.55" opacity="0.3"/><path d="M135.4 509.3 L155.6 500.8" stroke="#707070" stroke-width="0.55" opacity="0.35"/><path d="M125.2 519.7 L141.8 525.8" stroke="#707070" stroke-width="0.55" opacity="0.35"/><path d="M170.7 517.7 L181.1 513.3" stroke="#707070" stroke-width="0.55" opacity="0.35"/><path d="M170.7 517.7 L170.7 524.1" stroke="#707070" stroke-width="0.55" opacity="0.3"/><path d="M119.2 496.0 L130.4 500.1" stroke="#707070" stroke-width="0.55" opacity="0.35"/><path d="M114.6 538.2 L122.8 534.7" stroke="#707070" stroke-width="0.55" opacity="0.35"/><path d="M114.6 538.2 L114.6 552.9" stroke="#707070" stroke-width="0.55" opacity="0.3"/><path d="M146.3 578.6 L152.6 580.9" stroke="#707070" stroke-width="0.55" opacity="0.35"/><path d="M151.6 549.3 L165.9 543.3" stroke="#707070" stroke-width="0.55" opacity="0.35"/><path d="M151.6 549.3 L151.6 566.5" stroke="#707070" stroke-width="0.55" opacity="0.3"/><path d="M128.3 535.3 L143.0 529.1" stroke="#707070" stroke-width="0.55" opacity="0.35"/><path d="M128.3 535.3 L128.3 549.6" stroke="#707070" stroke-width="0.55" opacity="0.3"/><path d="M137.4 571.7 L147.5 575.4" stroke="#707070" stroke-width="0.55" opacity="0.35"/><path d="M137.4 571.7 L137.4 585.4" stroke="#707070" stroke-width="0.55" opacity="0.3"/><path d="M168.9 503.8 L180.3 498.9" stroke="#707070" stroke-width="0.55" opacity="0.35"/><path d="M168.9 503.8 L168.9 523.6" stroke="#707070" stroke-width="0.55" opacity="0.3"/><path d="M107.7 522.2 L116.7 518.4" stroke="#707070" stroke-width="0.55" opacity="0.35"/><path d="M132.1 516.1 L153.7 524.0" stroke="#707070" stroke-width="0.55" opacity="0.35"/><path d="M162.5 557.3 L177.0 562.6" stroke="#707070" stroke-width="0.55" opacity="0.35"/><path d="M162.5 557.3 L162.5 569.4" stroke="#707070" stroke-width="0.55" opacity="0.3"/><path d="M134.0 502.5 L146.8 497.1" stroke="#707070" stroke-width="0.55" opacity="0.35"/><path d="M134.0 502.5 L134.0 509.4" stroke="#707070" stroke-width="0.55" opacity="0.3"/><path d="M153.7 575.6 L159.5 577.7" stroke="#707070" stroke-width="0.55" opacity="0.35"/><path d="M153.7 575.6 L153.7 582.2" stroke="#707070" stroke-width="0.55" opacity="0.3"/><path d="M157.3 500.9 L170.3 505.7" stroke="#707070" stroke-width="0.55" opacity="0.35"/><path d="M108.5 573.1 L128.3 580.4" stroke="#707070" stroke-width="0.55" opacity="0.35"/><path d="M185.8 518.7 L192.9 515.8" stroke="#707070" stroke-width="0.55" opacity="0.35"/><path d="M113.7 552.0 L122.7 548.2" stroke="#707070" stroke-width="0.55" opacity="0.35"/><path d="M113.7 552.0 L113.7 567.4" stroke="#707070" stroke-width="0.55" opacity="0.3"/><path d="M131.5 516.8 L138.8 519.5" stroke="#707070" stroke-width="0.55" opacity="0.35"/><path d="M158.5 532.6 L161.2 531.5" stroke="#707070" stroke-width="0.55" opacity="0.35"/><path d="M161.2 504.5 L161.5 504.3" stroke="#707070" stroke-width="0.55" opacity="0.35"/><path d="M161.2 504.5 L161.2 515.6" stroke="#707070" stroke-width="0.55" opacity="0.3"/><path d="M107.2 524.8 L123.3 518.0" stroke="#707070" stroke-width="0.55" opacity="0.35"/><path d="M146.7 473.9 L153.0 476.2" stroke="#707070" stroke-width="0.55" opacity="0.35"/><path d="M146.7 473.9 L146.7 492.5" stroke="#707070" stroke-width="0.55" opacity="0.3"/><path d="M113.0 517.8 L133.0 525.2" stroke="#707070" stroke-width="0.55" opacity="0.35"/><path d="M113.0 517.8 L113.0 525.9" stroke="#707070" stroke-width="0.55" opacity="0.3"/><path d="M126.2 556.4 L143.3 549.2" stroke="#707070" stroke-width="0.55" opacity="0.35"/><path d="M87.1 495.3 L102.9 488.7" stroke="#707070" stroke-width="0.55" opacity="0.35"/><path d="M87.1 495.3 L87.1 505.0" stroke="#707070" stroke-width="0.55" opacity="0.3"/><path d="M132.5 500.9 L142.2 504.5" stroke="#707070" stroke-width="0.55" opacity="0.35"/><path d="M132.5 500.9 L132.5 514.3" stroke="#707070" stroke-width="0.55" opacity="0.3"/><path d="M151.5 506.2 L153.3 505.5" stroke="#707070" stroke-width="0.55" opacity="0.35"/><path d="M126.6 578.4 L137.6 573.8" stroke="#707070" stroke-width="0.55" opacity="0.35"/><path d="M126.6 578.4 L126.6 587.9" stroke="#707070" stroke-width="0.55" opacity="0.3"/><path d="M166.7 498.1 L168.0 498.6" stroke="#707070" stroke-width="0.55" opacity="0.35"/><path d="M163.8 560.8 L170.3 563.1" stroke="#707070" stroke-width="0.55" opacity="0.35"/><path d="M163.8 560.8 L163.8 570.0" stroke="#707070" stroke-width="0.55" opacity="0.3"/><path d="M158.3 518.6 L169.3 514.0" stroke="#707070" stroke-width="0.55" opacity="0.35"/><path d="M158.3 518.6 L158.3 526.5" stroke="#707070" stroke-width="0.55" opacity="0.3"/><path d="M156.2 488.4 L163.1 485.5" stroke="#707070" stroke-width="0.55" opacity="0.35"/><path d="M156.2 488.4 L156.2 501.4" stroke="#707070" stroke-width="0.55" opacity="0.3"/><path d="M123.1 520.1 L132.7 516.1" stroke="#707070" stroke-width="0.55" opacity="0.35"/><path d="M123.1 520.1 L123.1 531.2" stroke="#707070" stroke-width="0.55" opacity="0.3"/><path d="M126.4 534.6 L136.9 538.5" stroke="#707070" stroke-width="0.55" opacity="0.35"/><path d="M126.4 534.6 L126.4 540.6" stroke="#707070" stroke-width="0.55" opacity="0.3"/><path d="M135.1 551.9 L154.0 543.9" stroke="#707070" stroke-width="0.55" opacity="0.35"/><path d="M135.1 551.9 L135.1 569.3" stroke="#707070" stroke-width="0.55" opacity="0.3"/><path d="M84.7 513.7 L93.6 509.9" stroke="#707070" stroke-width="0.55" opacity="0.35"/><path d="M141.8 591.8 L148.0 594.1" stroke="#707070" stroke-width="0.55" opacity="0.35"/><path d="M159.7 542.1 L175.5 535.5" stroke="#707070" stroke-width="0.55" opacity="0.35"/><path d="M135.4 539.7 L149.6 544.9" stroke="#707070" stroke-width="0.55" opacity="0.35"/><path d="M166.3 509.0 L172.5 511.3" stroke="#707070" stroke-width="0.55" opacity="0.35"/><path d="M166.3 509.0 L166.3 515.4" stroke="#707070" stroke-width="0.55" opacity="0.3"/><path d="M157.6 503.5 L160.0 502.5" stroke="#707070" stroke-width="0.55" opacity="0.35"/><path d="M157.6 503.5 L157.6 516.9" stroke="#707070" stroke-width="0.55" opacity="0.3"/><path d="M127.6 532.8 L139.4 537.2" stroke="#707070" stroke-width="0.55" opacity="0.35"/><path d="M137.7 549.9 L147.2 545.9" stroke="#707070" stroke-width="0.55" opacity="0.35"/><path d="M144.9 505.4 L151.0 507.7" stroke="#707070" stroke-width="0.55" opacity="0.35"/><path d="M153.6 537.8 L160.9 534.7" stroke="#707070" stroke-width="0.55" opacity="0.35"/><path d="M153.6 537.8 L153.6 554.2" stroke="#707070" stroke-width="0.55" opacity="0.3"/><path d="M116.7 543.3 L139.2 533.8" stroke="#707070" stroke-width="0.55" opacity="0.35"/><path d="M116.7 543.3 L116.7 552.4" stroke="#707070" stroke-width="0.55" opacity="0.3"/><path d="M137.5 545.8 L144.3 542.9" stroke="#707070" stroke-width="0.55" opacity="0.35"/><path d="M113.4 520.7 L119.4 518.2" stroke="#707070" stroke-width="0.55" opacity="0.35"/><path d="M156.4 571.2 L161.2 573.0" stroke="#707070" stroke-width="0.55" opacity="0.35"/><path d="M156.4 571.2 L156.4 587.7" stroke="#707070" stroke-width="0.55" opacity="0.3"/><path d="M136.3 556.5 L146.7 560.4" stroke="#707070" stroke-width="0.55" opacity="0.35"/><path d="M153.9 503.4 L161.0 500.4" stroke="#707070" stroke-width="0.55" opacity="0.35"/><path d="M109.0 552.4 L129.1 544.0" stroke="#707070" stroke-width="0.55" opacity="0.35"/><path d="M109.0 552.4 L109.0 568.9" stroke="#707070" stroke-width="0.55" opacity="0.3"/><path d="M175.3 538.2 L185.5 541.9" stroke="#707070" stroke-width="0.55" opacity="0.35"/><path d="M175.3 538.2 L175.3 549.7" stroke="#707070" stroke-width="0.55" opacity="0.3"/><path d="M177.7 556.3 L187.7 560.0" stroke="#707070" stroke-width="0.55" opacity="0.35"/><path d="M177.7 556.3 L177.7 571.6" stroke="#707070" stroke-width="0.55" opacity="0.3"/><path d="M125.9 516.1 L137.4 511.2" stroke="#707070" stroke-width="0.55" opacity="0.35"/><path d="M170.1 508.0 L175.2 509.9" stroke="#707070" stroke-width="0.55" opacity="0.35"/><path d="M140.2 509.1 L160.8 500.4" stroke="#707070" stroke-width="0.55" opacity="0.35"/><path d="M127.9 559.3 L146.1 551.7" stroke="#707070" stroke-width="0.55" opacity="0.35"/><path d="M122.7 536.9 L129.7 539.5" stroke="#707070" stroke-width="0.55" opacity="0.35"/><path d="M161.6 481.6 L167.0 479.4" stroke="#707070" stroke-width="0.55" opacity="0.35"/><path d="M126.4 542.8 L141.3 536.5" stroke="#707070" stroke-width="0.55" opacity="0.35"/><path d="M126.4 542.8 L126.4 553.9" stroke="#707070" stroke-width="0.55" opacity="0.3"/><path d="M132.8 582.8 L151.1 575.1" stroke="#707070" stroke-width="0.55" opacity="0.35"/><path d="M132.8 582.8 L132.8 592.6" stroke="#707070" stroke-width="0.55" opacity="0.3"/><path d="M134.7 491.9 L149.3 497.3" stroke="#707070" stroke-width="0.55" opacity="0.35"/><path d="M154.5 495.4 L167.3 500.1" stroke="#707070" stroke-width="0.55" opacity="0.35"/><path d="M154.5 495.4 L154.5 512.8" stroke="#707070" stroke-width="0.55" opacity="0.3"/><path d="M149.7 497.4 L163.4 502.5" stroke="#707070" stroke-width="0.55" opacity="0.35"/><path d="M181.9 491.5 L192.0 495.2" stroke="#707070" stroke-width="0.55" opacity="0.35"/><path d="M181.9 491.5 L181.9 499.0" stroke="#707070" stroke-width="0.55" opacity="0.3"/></g><g filter="url(#bl2)"><path d="M88 537 L126 521 L149 525 L187 539 L187 551 L141 585 L116 572 L116 560 L88 550 Z" fill="#e08a18"/><path d="M88 537 L126 521 L149 525 L113 548 Z" fill="#eca038"/><path d="M113 548 L149 525 L187 539 L141 565 Z" fill="#e69422"/><path d="M88 537 L113 548 L149 525 M113 548 L113 560 M141 565 L141 585 M116 560 L141 565 L187 539" fill="none" stroke="#f8c060" stroke-width="0.9"/><path d="M95 538 L130 526 M102 543 L137 529 M120 533 L128 540 M133 528 L140 535 M125 552 L160 537 M132 558 L170 542 M150 548 L160 556 M120 565 L135 570" fill="none" stroke="#c86a08" stroke-width="0.9"/><path d="M92 544 L110 552 M96 541 L96 548 M104 538 L104 546 M121 530 L121 538 M140 538 L176 552 M150 532 L150 545 M163 537 L163 550 M172 542 L172 553 M124 572 L124 563 M131 575 L131 566 M150 575 L180 555" fill="none" stroke="#b86008" stroke-width="0.8" opacity="0.8"/></g></svg>

</body></html>
